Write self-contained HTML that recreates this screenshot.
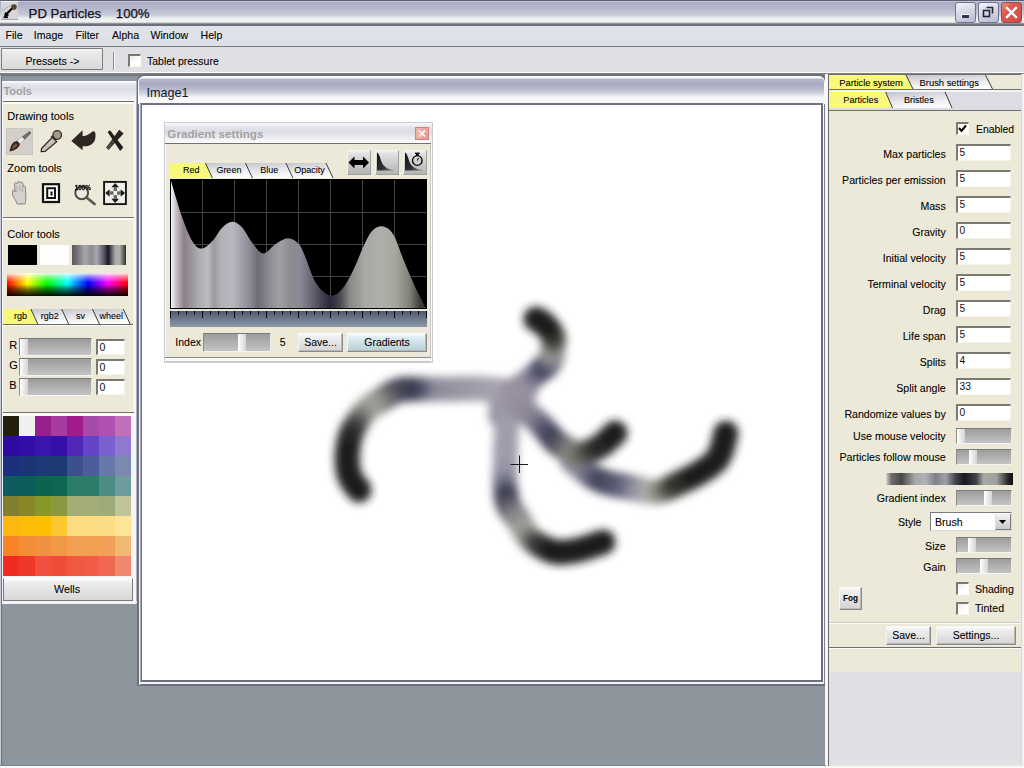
<!DOCTYPE html>
<html><head><meta charset="utf-8"><style>
html,body{margin:0;padding:0;width:1024px;height:768px;overflow:hidden;background:#8e969d;font-family:"Liberation Sans",sans-serif;}
div{box-sizing:border-box;}
</style></head><body>
<div style="position:absolute;left:0px;top:0px;width:1024px;height:26px;background:linear-gradient(to bottom,#5d6070 0,#5d6070 1px,#dcdeec 1px,#a9acc4 2px,#b4b7cb 8px,#c9cbd8 15px,#eceeed 18px,#f2f3f1 22px,#b8bac4 23px,#6c707c 24px,#6c707c 26px);"></div>
<svg style="position:absolute;left:0px;top:0px" width="20" height="22" viewBox="0 0 20 22">
<rect x="1" y="1" width="17" height="19" fill="#d6d6d8"/>
<rect x="1" y="1" width="17" height="1" fill="#f4f4f8"/>
<rect x="1" y="19" width="17" height="1" fill="#a8a8b0"/>
<path d="M2 10.5 L12 5" stroke="#707070" stroke-width="0.8" stroke-dasharray="1 1"/>
<circle cx="14" cy="7" r="2.8" fill="#5a4030"/>
<path d="M12 8.5 L6.5 14" stroke="#000" stroke-width="2.2"/>
<path d="M5 12 L9 15 L7 17 L4 17.5 Z" fill="#000"/>
<path d="M3.5 17.5 H8" stroke="#000" stroke-width="1.2"/>
</svg>
<div style="position:absolute;left:28.6px;top:6.63px;font-size:13.2px;line-height:13.2px;color:#101020;font-weight:normal;white-space:pre;-webkit-text-stroke:0.25px #101020;">PD Particles</div>
<div style="position:absolute;left:115.8px;top:6.63px;font-size:13.2px;line-height:13.2px;color:#101020;font-weight:normal;white-space:pre;-webkit-text-stroke:0.25px #101020;">100%</div>
<div style="position:absolute;left:955px;top:2px;width:21px;height:21px;background:linear-gradient(160deg,#f4f4fa 0%,#dcdce8 40%,#b8bcd2 100%);border:1px solid #707490;border-radius:3px;box-sizing:border-box;"></div>
<div style="position:absolute;left:978px;top:2px;width:21px;height:21px;background:linear-gradient(160deg,#f4f4fa 0%,#dcdce8 40%,#b8bcd2 100%);border:1px solid #707490;border-radius:3px;box-sizing:border-box;"></div>
<div style="position:absolute;left:1001px;top:2px;width:21px;height:21px;background:linear-gradient(135deg,#e8907a 0%,#dc5a50 35%,#d04848 100%);border:1px solid #8a5058;border-radius:3px;box-sizing:border-box;"></div>
<div style="position:absolute;left:961px;top:14px;width:8px;height:4px;background:#30344c;border-top:1px solid #fff;border-left:1px solid #fff;"></div>
<svg style="position:absolute;left:978px;top:2px" width="21" height="21"><path d="M8.5 5.5 H14.5 V11.5" stroke="#202438" stroke-width="1.6" fill="none"/><rect x="5.5" y="8.5" width="6" height="6" stroke="#202438" stroke-width="1.6" fill="none"/></svg>
<svg style="position:absolute;left:1001px;top:2px" width="21" height="21"><path d="M6 6 L15 15 M15 6 L6 15" stroke="#fff" stroke-width="2.4" stroke-linecap="square"/></svg>
<div style="position:absolute;left:0px;top:26px;width:1024px;height:20px;background:linear-gradient(to bottom,#e2e4ec,#dcdfe6);"></div>
<div style="position:absolute;left:0px;top:46px;width:1024px;height:1px;background:#767a78;"></div>
<div style="position:absolute;left:5.5px;top:30.33px;font-size:10.6px;line-height:10.6px;color:#000;font-weight:normal;white-space:pre;-webkit-text-stroke:0.08px #000;">File</div>
<div style="position:absolute;left:33.8px;top:30.33px;font-size:10.6px;line-height:10.6px;color:#000;font-weight:normal;white-space:pre;-webkit-text-stroke:0.08px #000;">Image</div>
<div style="position:absolute;left:75.5px;top:30.33px;font-size:10.6px;line-height:10.6px;color:#000;font-weight:normal;white-space:pre;-webkit-text-stroke:0.08px #000;">Filter</div>
<div style="position:absolute;left:112px;top:30.33px;font-size:10.6px;line-height:10.6px;color:#000;font-weight:normal;white-space:pre;-webkit-text-stroke:0.08px #000;">Alpha</div>
<div style="position:absolute;left:150.5px;top:30.33px;font-size:10.6px;line-height:10.6px;color:#000;font-weight:normal;white-space:pre;-webkit-text-stroke:0.08px #000;">Window</div>
<div style="position:absolute;left:200.5px;top:30.33px;font-size:10.6px;line-height:10.6px;color:#000;font-weight:normal;white-space:pre;-webkit-text-stroke:0.08px #000;">Help</div>
<div style="position:absolute;left:0px;top:47px;width:1024px;height:26px;background:#e0dfe4;"></div>
<div style="position:absolute;left:0px;top:72px;width:1024px;height:1px;background:#fafafa;"></div>
<div style="position:absolute;left:0px;top:73px;width:1024px;height:3px;background:linear-gradient(to bottom,#84888c,#6e727a);"></div>
<div style="position:absolute;left:1px;top:48px;width:102px;height:22px;background:linear-gradient(to bottom,#fbfbfb 0,#ededed 2px,#d8d8d8 100%);border:1px solid #7a7a7a;box-sizing:border-box;border-radius:1px;"></div>
<div style="position:absolute;left:25.5px;top:55.53px;font-size:10.6px;line-height:10.6px;color:#000;font-weight:normal;white-space:pre;-webkit-text-stroke:0.08px #000;">Pressets -&gt;</div>
<div style="position:absolute;left:113px;top:52px;width:1px;height:18px;background:#8c8c90;"></div>
<div style="position:absolute;left:114px;top:52px;width:1px;height:18px;background:#fcfcfc;"></div>
<div style="position:absolute;left:128px;top:54px;width:13px;height:13px;background:linear-gradient(135deg,#ecece8,#fff 60%);border-top:2px solid #7a7a72;border-left:2px solid #7a7a72;border-right:1px solid #fafaf6;border-bottom:1px solid #fafaf6;"></div>
<div style="position:absolute;left:147px;top:56.41px;font-size:10.5px;line-height:10.5px;color:#000;font-weight:normal;white-space:pre;-webkit-text-stroke:0.08px #000;">Tablet pressure</div>
<div style="position:absolute;left:0px;top:76px;width:1024px;height:692px;background:#8e969d;"></div>
<div style="position:absolute;left:0px;top:75px;width:2px;height:693px;background:#c8ccd8;"></div>
<div style="position:absolute;left:1px;top:75px;width:1px;height:693px;background:#6c7484;"></div>
<div style="position:absolute;left:2px;top:81px;width:135px;height:523px;background:#f4f4f8;"></div>
<div style="position:absolute;left:2px;top:81px;width:134px;height:21px;background:linear-gradient(to bottom,#ffffff 0,#e6e6ee 3px,#dcdce6 8px,#ececf0 15px,#f8f8f8 20px);"></div>
<div style="position:absolute;left:136px;top:81px;width:1px;height:523px;background:#aab0bc;"></div>
<div style="position:absolute;left:3.4px;top:86.29px;font-size:11px;line-height:11px;color:#a0a0a0;font-weight:bold;white-space:pre;">Tools</div>
<div style="position:absolute;left:3px;top:101px;width:131px;height:1px;background:#6e6e6a;"></div>
<div style="position:absolute;left:3px;top:102px;width:131px;height:2px;background:#fdfdf8;"></div>
<div style="position:absolute;left:3px;top:104px;width:130px;height:308px;background:#ece9d8;"></div>
<div style="position:absolute;left:133px;top:102px;width:3px;height:500px;background:#f6f6f4;"></div>
<div style="position:absolute;left:7.3px;top:110.89px;font-size:11px;line-height:11px;color:#000;font-weight:normal;white-space:pre;-webkit-text-stroke:0.08px #000;">Drawing tools</div>
<div style="position:absolute;left:7.3px;top:162.69px;font-size:11px;line-height:11px;color:#000;font-weight:normal;white-space:pre;-webkit-text-stroke:0.08px #000;">Zoom tools</div>
<div style="position:absolute;left:3px;top:217px;width:131px;height:1px;background:#74746c;"></div>
<div style="position:absolute;left:3px;top:218px;width:131px;height:2px;background:#fcfcf8;"></div>
<div style="position:absolute;left:3px;top:220px;width:130px;height:192px;background:#ece9d8;"></div>
<div style="position:absolute;left:7.3px;top:228.69px;font-size:11px;line-height:11px;color:#000;font-weight:normal;white-space:pre;-webkit-text-stroke:0.08px #000;">Color tools</div>
<svg style="position:absolute;left:0;top:120px" width="136" height="95" viewBox="0 120 136 95">
<defs><filter id="sb" x="-30%" y="-30%" width="160%" height="160%"><feGaussianBlur stdDeviation="0.6"/></filter>
<filter id="sb2" x="-30%" y="-30%" width="160%" height="160%"><feGaussianBlur stdDeviation="0.45"/></filter>
<linearGradient id="xg" x1="0" y1="0" x2="0" y2="1"><stop offset="0" stop-color="#201a18"/><stop offset="1" stop-color="#3a3430"/></linearGradient></defs>
<rect x="6" y="128" width="27" height="27" fill="#c9c5c0"/>
<rect x="7" y="129" width="25" height="25" fill="#d2cfca"/>
<g filter="url(#sb2)">
<path d="M29.5 131.5 L31 133 L24 140 L21.5 137.5 Z" fill="#74726a" stroke="#4a4840" stroke-width="0.6"/>
<path d="M21.8 136.6 L24.6 139.4 L19.6 144.2 L16.8 141.4 Z" fill="#eeeeee" stroke="#8a8a8a" stroke-width="0.5"/>
<path d="M17.5 141 C13 141 10.5 145 9.5 151.5 C15 150.5 19 148 20 144 Z" fill="#3e2a1e"/>
<path d="M16 143.5 C13.5 144.5 12.5 146.5 12 149 C14.5 148 16.5 146.5 17.5 145 Z" fill="#7a5a44"/>
</g>
<g filter="url(#sb2)">
<circle cx="57.2" cy="135" r="4.3" fill="#a49690" stroke="#3a2a20" stroke-width="1.3"/>
<path d="M51.5 136 L56 140.5" stroke="#3a2a20" stroke-width="2.2"/>
<path d="M52.3 137.3 L56.7 141.7 L45 151.5 L41.2 151.6 L41.5 148.5 Z" fill="#c8c0b8" stroke="#2a2220" stroke-width="1.2"/>
<path d="M71.3 141 L82.6 130.3 L82.6 136.2 C86.5 136 89.5 134 92.5 131.5 C95.5 130.5 96 134.5 95.3 138.5 C94.3 143.5 90 146.5 84.5 146.3 L82.6 146.2 L82.6 150.3 Z" fill="#2e2620"/>
</g>
<g filter="url(#sb)">
<polygon points="107.6,132 110,130.3 123.3,147.6 120.2,151" fill="#221c1a"/>
<polygon points="119.2,129.8 123.6,133.6 108.6,149.8 106.2,147.6" fill="#2a2420"/>
<polygon points="113,140 106.2,147.6 108.6,149.8 114.5,142" fill="#4a4440"/>
</g>
<g filter="url(#sb2)">
<path d="M17 204 L15.5 200 C13.5 198 12 195 12.5 191 C13 189.5 14.5 190 15 192 L14.5 184 C14.5 182 16.5 182 17 184 L17.5 182.5 C18 180.8 20 181 20 183 L20.5 183 C21 181.5 23 182 23 184 L23.5 187 C24 185.5 25.5 186 25.5 188 L25.8 197 C25.8 200 25.5 202.5 25 204 Z" fill="#d4d0cc" stroke="#8a8682" stroke-width="1"/>
<path d="M17 186 V192 M20 185 V191 M22.5 186 V192" stroke="#a09c98" stroke-width="0.7"/>
</g>
<rect x="43" y="184.2" width="16" height="17.8" fill="#fbfbf8" stroke="#111" stroke-width="2.2"/>
<rect x="47.2" y="188.2" width="7.8" height="9.8" fill="#fbfbf8" stroke="#111" stroke-width="2"/>
<rect x="50.5" y="191.5" width="2" height="4" fill="#111"/>
<g filter="url(#sb2)">
<circle cx="81.7" cy="192.8" r="6.4" fill="#eceae0" stroke="#4c4c4c" stroke-width="2"/>
<path d="M86.5 197.5 L94.5 204" stroke="#585858" stroke-width="2.8" stroke-linecap="round"/>
<text x="82.8" y="190" font-size="7" font-weight="bold" text-anchor="middle" fill="#151515" stroke="#151515" stroke-width="0.35" font-family="Liberation Sans" textLength="16" lengthAdjust="spacingAndGlyphs">100%</text>
</g>
<rect x="104.1" y="181.9" width="21.8" height="22.2" fill="#f2f0ea" stroke="#151515" stroke-width="1.9"/>
<g filter="url(#sb2)">
<path d="M115.2 183 L119 187.3 L111.4 187.3 Z" fill="#1a1a1a"/><path d="M115.2 203 L119 198.7 L111.4 198.7 Z" fill="#1a1a1a"/>
<path d="M105.3 193 L109.6 189.2 L109.6 196.8 Z" fill="#1a1a1a"/><path d="M125 193 L120.7 189.2 L120.7 196.8 Z" fill="#1a1a1a"/>
<rect x="113.6" y="187" width="3.4" height="4" fill="#6a6a6a"/><rect x="113.6" y="195" width="3.4" height="4" fill="#6a6a6a"/>
<rect x="109.5" y="191.3" width="4" height="3.4" fill="#6a6a6a"/><rect x="117" y="191.3" width="4" height="3.4" fill="#6a6a6a"/>
</g>
</svg>
<div style="position:absolute;left:8px;top:245px;width:29px;height:20px;background:#000;"></div>
<div style="position:absolute;left:40px;top:245px;width:29px;height:20px;background:#fdfdfb;"></div>
<div style="position:absolute;left:72px;top:245px;width:54px;height:20px;background:linear-gradient(to right,#585858 0%,#787078 10%,#a8a8ac 24%,#8a8a90 36%,#a8a8b0 46%,#505060 60%,#181828 67%,#a8a8a8 80%,#b0b0a8 88%,#303028 100%);"></div>
<div style="position:absolute;left:7px;top:273px;width:121px;height:23px;background:linear-gradient(to bottom,rgba(255,255,255,0.9) 0%,rgba(255,255,255,0.45) 18%,rgba(255,255,255,0) 42%,rgba(0,0,0,0) 48%,rgba(0,0,0,0.55) 72%,rgba(0,0,0,0.95) 100%),linear-gradient(to right,#ff0000 0%,#ffff00 17%,#00ff00 33%,#00ffff 50%,#0000ff 67%,#ff00ff 83%,#ff0000 100%);"></div>
<svg style="position:absolute;left:3px;top:309px" width="130" height="15" viewBox="0 0 130 15"><defs><linearGradient id="tg1" x1="0" y1="0" x2="0.3" y2="1"><stop offset="0" stop-color="#c4c4cc"/><stop offset="0.55" stop-color="#e6e6ea"/><stop offset="1" stop-color="#fbfbfb"/></linearGradient></defs><polygon points="0,0 27.8,0 34.8,15 0,15" fill="#f8f87a"/><polygon points="27.8,0 58.6,0 65.6,15 34.8,15" fill="url(#tg1)"/><polygon points="58.6,0 89.4,0 96.4,15 65.6,15" fill="url(#tg1)"/><polygon points="89.4,0 120.2,0 127.19999999999999,15 96.4,15" fill="url(#tg1)"/><line x1="27.8" y1="0" x2="34.8" y2="15" stroke="#3c3c3c" stroke-width="1"/><line x1="58.6" y1="0" x2="65.6" y2="15" stroke="#3c3c3c" stroke-width="1"/><line x1="89.4" y1="0" x2="96.4" y2="15" stroke="#3c3c3c" stroke-width="1"/><line x1="120.2" y1="0" x2="127.19999999999999" y2="15" stroke="#3c3c3c" stroke-width="1"/></svg>
<div style="position:absolute;left:-179.6px;width:400px;top:311.68px;font-size:9px;line-height:9px;color:#000;font-weight:normal;white-space:pre;text-align:center;-webkit-text-stroke:0.08px #000;">rgb</div>
<div style="position:absolute;left:-150.3px;width:400px;top:311.68px;font-size:9px;line-height:9px;color:#000;font-weight:normal;white-space:pre;text-align:center;-webkit-text-stroke:0.08px #000;">rgb2</div>
<div style="position:absolute;left:-119.5px;width:400px;top:311.68px;font-size:9px;line-height:9px;color:#000;font-weight:normal;white-space:pre;text-align:center;-webkit-text-stroke:0.08px #000;">sv</div>
<div style="position:absolute;left:-88.69999999999999px;width:400px;top:311.68px;font-size:9px;line-height:9px;color:#000;font-weight:normal;white-space:pre;text-align:center;-webkit-text-stroke:0.08px #000;">wheel</div>
<div style="position:absolute;left:3px;top:324px;width:130px;height:1px;background:#6a6a66;"></div>
<div style="position:absolute;left:3px;top:325px;width:130px;height:1px;background:#fafaf6;"></div>
<div style="position:absolute;left:9.3px;top:339.69px;font-size:11px;line-height:11px;color:#000;font-weight:normal;white-space:pre;-webkit-text-stroke:0.08px #000;">R</div>
<div style="position:absolute;left:19px;top:338px;width:73px;height:18px;background:linear-gradient(to bottom,#9c9c9c,#c4c4c4);border-top:1px solid #7a7a7a;border-left:1px solid #8a8a8a;border-bottom:1px solid #f4f4f4;border-right:1px solid #eaeaea;"></div>
<div style="position:absolute;left:20px;top:339px;width:8px;height:16px;background:linear-gradient(to right,#ffffff,#d4d4d4);"></div>
<div style="position:absolute;left:96px;top:339px;width:29px;height:16px;background:#fff;border-top:2px solid #7a7a72;border-left:2px solid #7a7a72;border-right:1px solid #f4f4ee;border-bottom:1px solid #f4f4ee;"></div>
<div style="position:absolute;left:99.5px;top:342.03px;font-size:10.6px;line-height:10.6px;color:#101010;font-weight:normal;white-space:pre;">0</div>
<div style="position:absolute;left:9.3px;top:359.69px;font-size:11px;line-height:11px;color:#000;font-weight:normal;white-space:pre;-webkit-text-stroke:0.08px #000;">G</div>
<div style="position:absolute;left:19px;top:358px;width:73px;height:18px;background:linear-gradient(to bottom,#9c9c9c,#c4c4c4);border-top:1px solid #7a7a7a;border-left:1px solid #8a8a8a;border-bottom:1px solid #f4f4f4;border-right:1px solid #eaeaea;"></div>
<div style="position:absolute;left:20px;top:359px;width:8px;height:16px;background:linear-gradient(to right,#ffffff,#d4d4d4);"></div>
<div style="position:absolute;left:96px;top:359px;width:29px;height:16px;background:#fff;border-top:2px solid #7a7a72;border-left:2px solid #7a7a72;border-right:1px solid #f4f4ee;border-bottom:1px solid #f4f4ee;"></div>
<div style="position:absolute;left:99.5px;top:362.03px;font-size:10.6px;line-height:10.6px;color:#101010;font-weight:normal;white-space:pre;">0</div>
<div style="position:absolute;left:9.3px;top:379.69px;font-size:11px;line-height:11px;color:#000;font-weight:normal;white-space:pre;-webkit-text-stroke:0.08px #000;">B</div>
<div style="position:absolute;left:19px;top:378px;width:73px;height:18px;background:linear-gradient(to bottom,#9c9c9c,#c4c4c4);border-top:1px solid #7a7a7a;border-left:1px solid #8a8a8a;border-bottom:1px solid #f4f4f4;border-right:1px solid #eaeaea;"></div>
<div style="position:absolute;left:20px;top:379px;width:8px;height:16px;background:linear-gradient(to right,#ffffff,#d4d4d4);"></div>
<div style="position:absolute;left:96px;top:379px;width:29px;height:16px;background:#fff;border-top:2px solid #7a7a72;border-left:2px solid #7a7a72;border-right:1px solid #f4f4ee;border-bottom:1px solid #f4f4ee;"></div>
<div style="position:absolute;left:99.5px;top:382.03px;font-size:10.6px;line-height:10.6px;color:#101010;font-weight:normal;white-space:pre;">0</div>
<div style="position:absolute;left:3px;top:412px;width:131px;height:1px;background:#74746c;"></div>
<div style="position:absolute;left:3px;top:413px;width:131px;height:3px;background:#fcfcf8;"></div>
<div style="position:absolute;left:3px;top:416px;width:16px;height:20px;background:#24200e;"></div>
<div style="position:absolute;left:19px;top:416px;width:16px;height:20px;background:#f0f0f0;"></div>
<div style="position:absolute;left:35px;top:416px;width:16px;height:20px;background:#98208a;"></div>
<div style="position:absolute;left:51px;top:416px;width:16px;height:20px;background:#a83c9e;"></div>
<div style="position:absolute;left:67px;top:416px;width:16px;height:20px;background:#a01c8c;"></div>
<div style="position:absolute;left:83px;top:416px;width:16px;height:20px;background:#a84aa8;"></div>
<div style="position:absolute;left:99px;top:416px;width:16px;height:20px;background:#b050b0;"></div>
<div style="position:absolute;left:115px;top:416px;width:16px;height:20px;background:#c070b8;"></div>
<div style="position:absolute;left:3px;top:436px;width:16px;height:20px;background:#2e0ca0;"></div>
<div style="position:absolute;left:19px;top:436px;width:16px;height:20px;background:#340ca8;"></div>
<div style="position:absolute;left:35px;top:436px;width:16px;height:20px;background:#3c14b0;"></div>
<div style="position:absolute;left:51px;top:436px;width:16px;height:20px;background:#3410a8;"></div>
<div style="position:absolute;left:67px;top:436px;width:16px;height:20px;background:#5028b8;"></div>
<div style="position:absolute;left:83px;top:436px;width:16px;height:20px;background:#6444c8;"></div>
<div style="position:absolute;left:99px;top:436px;width:16px;height:20px;background:#7c60d0;"></div>
<div style="position:absolute;left:115px;top:436px;width:16px;height:20px;background:#9078d0;"></div>
<div style="position:absolute;left:3px;top:456px;width:16px;height:20px;background:#1c3080;"></div>
<div style="position:absolute;left:19px;top:456px;width:16px;height:20px;background:#1c3478;"></div>
<div style="position:absolute;left:35px;top:456px;width:16px;height:20px;background:#1c3a78;"></div>
<div style="position:absolute;left:51px;top:456px;width:16px;height:20px;background:#1c3a74;"></div>
<div style="position:absolute;left:67px;top:456px;width:16px;height:20px;background:#3c5090;"></div>
<div style="position:absolute;left:83px;top:456px;width:16px;height:20px;background:#4c5c9c;"></div>
<div style="position:absolute;left:99px;top:456px;width:16px;height:20px;background:#6878a8;"></div>
<div style="position:absolute;left:115px;top:456px;width:16px;height:20px;background:#7c88b0;"></div>
<div style="position:absolute;left:3px;top:476px;width:16px;height:20px;background:#0c5c60;"></div>
<div style="position:absolute;left:19px;top:476px;width:16px;height:20px;background:#0c5c5c;"></div>
<div style="position:absolute;left:35px;top:476px;width:16px;height:20px;background:#0c6450;"></div>
<div style="position:absolute;left:51px;top:476px;width:16px;height:20px;background:#0c6850;"></div>
<div style="position:absolute;left:67px;top:476px;width:16px;height:20px;background:#2c7c6c;"></div>
<div style="position:absolute;left:83px;top:476px;width:16px;height:20px;background:#2c7c6c;"></div>
<div style="position:absolute;left:99px;top:476px;width:16px;height:20px;background:#4c8c84;"></div>
<div style="position:absolute;left:115px;top:476px;width:16px;height:20px;background:#6c9c9c;"></div>
<div style="position:absolute;left:3px;top:496px;width:16px;height:20px;background:#808030;"></div>
<div style="position:absolute;left:19px;top:496px;width:16px;height:20px;background:#888828;"></div>
<div style="position:absolute;left:35px;top:496px;width:16px;height:20px;background:#889828;"></div>
<div style="position:absolute;left:51px;top:496px;width:16px;height:20px;background:#8c9840;"></div>
<div style="position:absolute;left:67px;top:496px;width:16px;height:20px;background:#a4ac78;"></div>
<div style="position:absolute;left:83px;top:496px;width:16px;height:20px;background:#a4ac78;"></div>
<div style="position:absolute;left:99px;top:496px;width:16px;height:20px;background:#a0ac78;"></div>
<div style="position:absolute;left:115px;top:496px;width:16px;height:20px;background:#c0c498;"></div>
<div style="position:absolute;left:3px;top:516px;width:16px;height:20px;background:#fcb810;"></div>
<div style="position:absolute;left:19px;top:516px;width:16px;height:20px;background:#fcbc08;"></div>
<div style="position:absolute;left:35px;top:516px;width:16px;height:20px;background:#fcc000;"></div>
<div style="position:absolute;left:51px;top:516px;width:16px;height:20px;background:#fcc830;"></div>
<div style="position:absolute;left:67px;top:516px;width:16px;height:20px;background:#fcdc80;"></div>
<div style="position:absolute;left:83px;top:516px;width:16px;height:20px;background:#fcdc80;"></div>
<div style="position:absolute;left:99px;top:516px;width:16px;height:20px;background:#fcdc84;"></div>
<div style="position:absolute;left:115px;top:516px;width:16px;height:20px;background:#fce498;"></div>
<div style="position:absolute;left:3px;top:536px;width:16px;height:20px;background:#f88428;"></div>
<div style="position:absolute;left:19px;top:536px;width:16px;height:20px;background:#f48c38;"></div>
<div style="position:absolute;left:35px;top:536px;width:16px;height:20px;background:#f09040;"></div>
<div style="position:absolute;left:51px;top:536px;width:16px;height:20px;background:#f09844;"></div>
<div style="position:absolute;left:67px;top:536px;width:16px;height:20px;background:#f0a050;"></div>
<div style="position:absolute;left:83px;top:536px;width:16px;height:20px;background:#f0a050;"></div>
<div style="position:absolute;left:99px;top:536px;width:16px;height:20px;background:#f0a058;"></div>
<div style="position:absolute;left:115px;top:536px;width:16px;height:20px;background:#f0b870;"></div>
<div style="position:absolute;left:3px;top:556px;width:16px;height:20px;background:#f02c20;"></div>
<div style="position:absolute;left:19px;top:556px;width:16px;height:20px;background:#f03828;"></div>
<div style="position:absolute;left:35px;top:556px;width:16px;height:20px;background:#f05040;"></div>
<div style="position:absolute;left:51px;top:556px;width:16px;height:20px;background:#f04c38;"></div>
<div style="position:absolute;left:67px;top:556px;width:16px;height:20px;background:#f05840;"></div>
<div style="position:absolute;left:83px;top:556px;width:16px;height:20px;background:#f05c48;"></div>
<div style="position:absolute;left:99px;top:556px;width:16px;height:20px;background:#f06850;"></div>
<div style="position:absolute;left:115px;top:556px;width:16px;height:20px;background:#f08870;"></div>
<div style="position:absolute;left:131px;top:416px;width:2px;height:160px;background:#f4f4f4;"></div>
<div style="position:absolute;left:3px;top:578px;width:130px;height:23px;background:linear-gradient(to bottom,#fbfbfb 0,#eeeeee 3px,#d6d6d6 100%);border:1px solid #7a7a7a;border-top-color:#ffffff;"></div>
<div style="position:absolute;left:-133px;width:400px;top:584.36px;font-size:10.8px;line-height:10.8px;color:#000;font-weight:normal;white-space:pre;text-align:center;-webkit-text-stroke:0.08px #000;">Wells</div>
<div style="position:absolute;left:2px;top:601px;width:135px;height:2px;background:#f4f4f6;"></div>
<div style="position:absolute;left:137px;top:74px;width:689px;height:612px;background:#6c7078;border-radius:7px 7px 0 0;"></div>
<div style="position:absolute;left:138px;top:76px;width:687px;height:609px;background:#fafafc;border-radius:6px 6px 0 0;"></div>
<div style="position:absolute;left:139px;top:77px;width:685px;height:27px;background:linear-gradient(to bottom,#fafafe 0,#fafafe 1px,#b4b6cc 2px,#a8aac2 7px,#b6b9cb 12px,#d4d8e2 17px,#f4f5f8 20px,#fafafa 26px);border-radius:5px 5px 0 0;"></div>
<div style="position:absolute;left:146.5px;top:86.53px;font-size:12.6px;line-height:12.6px;color:#101828;font-weight:normal;white-space:pre;">Image1</div>
<div style="position:absolute;left:140px;top:103px;width:683px;height:1px;background:#70747c;"></div>
<div style="position:absolute;left:140px;top:104px;width:683px;height:580px;background:#6c7080;"></div>
<div style="position:absolute;left:142px;top:105px;width:679px;height:575px;background:#ffffff;"></div>
<div style="position:absolute;left:140px;top:104px;width:1px;height:580px;background:#a4a4b4;"></div>
<div style="position:absolute;left:823px;top:104px;width:1px;height:581px;background:#fafafa;"></div>
<div style="position:absolute;left:824px;top:104px;width:1px;height:581px;background:#7c8090;"></div>
<div style="position:absolute;left:140px;top:682px;width:684px;height:2px;background:#f4f4f8;"></div>
<div style="position:absolute;left:139px;top:684px;width:686px;height:1px;background:#6c7080;"></div>
<div style="position:absolute;left:139px;top:104px;width:1px;height:581px;background:#f4f4f8;"></div>
<div style="position:absolute;left:138px;top:104px;width:1px;height:581px;background:#6c7080;"></div>
<div style="position:absolute;left:164px;top:122px;width:269px;height:241px;background:#f8f8f8;border:1px solid #c8ccd4;"></div>
<div style="position:absolute;left:165px;top:123px;width:267px;height:20px;background:linear-gradient(to bottom,#fafafc 0,#e4e4ec 4px,#dcdce4 9px,#eeeef2 15px,#fafafa 19px);"></div>
<div style="position:absolute;left:167.3px;top:128.30px;font-size:11.7px;line-height:11.7px;color:#a2a2a2;font-weight:bold;white-space:pre;">Gradient settings</div>
<div style="position:absolute;left:415px;top:127px;width:14px;height:13px;background:linear-gradient(135deg,#f4b8b0,#e89890);border:1px solid #d88080;"></div>
<svg style="position:absolute;left:415px;top:127px" width="14" height="13"><path d="M4 3.5 L10 9.5 M10 3.5 L4 9.5" stroke="#fff" stroke-width="1.6"/></svg>
<div style="position:absolute;left:165px;top:143px;width:266px;height:1px;background:#707070;"></div>
<div style="position:absolute;left:165px;top:144px;width:266px;height:214px;background:#ece9d8;border-left:1px solid #f8f8f6;border-right:1px solid #c8c8c8;"></div>
<div style="position:absolute;left:165px;top:357px;width:266px;height:1px;background:#8a8a86;"></div>
<div style="position:absolute;left:165px;top:358px;width:266px;height:3px;background:#fafafa;"></div>
<div style="position:absolute;left:166px;top:361px;width:265px;height:1px;background:#c8c8cc;"></div>
<svg style="position:absolute;left:170px;top:163px" width="170" height="15" viewBox="0 0 170 15"><defs><linearGradient id="tg2" x1="0" y1="0" x2="0.3" y2="1"><stop offset="0" stop-color="#c4c4cc"/><stop offset="0.55" stop-color="#e6e6ea"/><stop offset="1" stop-color="#fbfbfb"/></linearGradient></defs><polygon points="0,0 35.400000000000006,0 42.400000000000006,15 0,15" fill="#f8f87a"/><polygon points="35.400000000000006,0 75.4,0 82.4,15 42.400000000000006,15" fill="url(#tg2)"/><polygon points="75.4,0 115.89999999999998,0 122.89999999999998,15 82.4,15" fill="url(#tg2)"/><polygon points="115.89999999999998,0 156,0 163,15 122.89999999999998,15" fill="url(#tg2)"/><line x1="35.400000000000006" y1="0" x2="42.400000000000006" y2="15" stroke="#3c3c3c" stroke-width="1"/><line x1="75.4" y1="0" x2="82.4" y2="15" stroke="#3c3c3c" stroke-width="1"/><line x1="115.89999999999998" y1="0" x2="122.89999999999998" y2="15" stroke="#3c3c3c" stroke-width="1"/><line x1="156" y1="0" x2="163" y2="15" stroke="#3c3c3c" stroke-width="1"/></svg>
<div style="position:absolute;left:-8.800000000000011px;width:400px;top:165.98px;font-size:9px;line-height:9px;color:#000;font-weight:normal;white-space:pre;text-align:center;-webkit-text-stroke:0.08px #000;">Red</div>
<div style="position:absolute;left:28.900000000000006px;width:400px;top:165.98px;font-size:9px;line-height:9px;color:#000;font-weight:normal;white-space:pre;text-align:center;-webkit-text-stroke:0.08px #000;">Green</div>
<div style="position:absolute;left:69.14999999999998px;width:400px;top:165.98px;font-size:9px;line-height:9px;color:#000;font-weight:normal;white-space:pre;text-align:center;-webkit-text-stroke:0.08px #000;">Blue</div>
<div style="position:absolute;left:109.44999999999999px;width:400px;top:165.98px;font-size:9px;line-height:9px;color:#000;font-weight:normal;white-space:pre;text-align:center;-webkit-text-stroke:0.08px #000;">Opacity</div>
<div style="position:absolute;left:347px;top:150px;width:24px;height:25px;background:linear-gradient(to bottom,#f0f0f0 0,#e0e0e0 3px,#b4b4b4 100%);border:1px solid #a0a0a0;border-top-color:#f4f4f4;border-left-color:#f0f0f0;"></div>
<div style="position:absolute;left:375px;top:150px;width:24px;height:25px;background:linear-gradient(to bottom,#f0f0f0 0,#e0e0e0 3px,#b4b4b4 100%);border:1px solid #a0a0a0;border-top-color:#f4f4f4;border-left-color:#f0f0f0;"></div>
<div style="position:absolute;left:403px;top:150px;width:24px;height:25px;background:linear-gradient(to bottom,#f0f0f0 0,#e0e0e0 3px,#b4b4b4 100%);border:1px solid #a0a0a0;border-top-color:#f4f4f4;border-left-color:#f0f0f0;"></div>
<svg style="position:absolute;left:347px;top:150px" width="84" height="25">
<path d="M1.5 12.5 L7.5 6.5 L7.5 10 L11.5 10 L11.5 15 L7.5 15 L7.5 18.5 Z" fill="#000"/>
<path d="M22 12.5 L16 6.5 L16 10 L11 10 L11 15 L16 15 L16 18.5 Z" fill="#000"/>
<defs><linearGradient id="gcrv" x1="0" y1="0" x2="1" y2="1"><stop offset="0" stop-color="#101010"/><stop offset="0.6" stop-color="#303030"/><stop offset="1" stop-color="#8a8a8a"/></linearGradient></defs>
<path d="M30 2.5 C32 3 33 8 35 13 C37 17 41 19.5 48 20.5 L30 20.5 Z" fill="url(#gcrv)"/>
<path d="M58 2.5 C60 3 61 8 63 13 C65 17 69 19.5 77 20.5 L58 20.5 Z" fill="url(#gcrv)"/>
<circle cx="70.3" cy="10.5" r="4.8" fill="#d0d0d0" stroke="#000" stroke-width="1.3"/>
<path d="M70.3 10.5 L71.5 8" stroke="#000" stroke-width="1"/>
<rect x="69" y="4" width="2.6" height="2" fill="#000"/>
<rect x="68" y="2.6" width="4.6" height="1.4" fill="#000"/>
</svg>
<svg style="position:absolute;left:170px;top:179px" width="257" height="130" viewBox="0 0 257 130">
<defs><linearGradient id="gfill" x1="1" y1="0" x2="256" y2="0" gradientUnits="userSpaceOnUse"><stop offset="0.000" stop-color="#f4f4fa"/><stop offset="0.020" stop-color="#c8c0c8"/><stop offset="0.051" stop-color="#8a8088"/><stop offset="0.075" stop-color="#9a9098"/><stop offset="0.114" stop-color="#b0b0b4"/><stop offset="0.145" stop-color="#bcbcc0"/><stop offset="0.169" stop-color="#9a9a9e"/><stop offset="0.192" stop-color="#b0b0b4"/><stop offset="0.239" stop-color="#b8b8c0"/><stop offset="0.271" stop-color="#a4a4b0"/><stop offset="0.310" stop-color="#8a8a94"/><stop offset="0.341" stop-color="#6c6c74"/><stop offset="0.380" stop-color="#88888e"/><stop offset="0.427" stop-color="#a0a0a6"/><stop offset="0.467" stop-color="#8c8c90"/><stop offset="0.506" stop-color="#8a8a96"/><stop offset="0.545" stop-color="#6c6c78"/><stop offset="0.584" stop-color="#484858"/><stop offset="0.624" stop-color="#282838"/><stop offset="0.663" stop-color="#484850"/><stop offset="0.702" stop-color="#8a8a88"/><stop offset="0.761" stop-color="#a8a8a4"/><stop offset="0.820" stop-color="#b0b0aa"/><stop offset="0.878" stop-color="#a8a8a0"/><stop offset="0.937" stop-color="#808078"/><stop offset="0.976" stop-color="#404038"/><stop offset="1.000" stop-color="#303028"/></linearGradient></defs>
<rect width="257" height="130" fill="#000"/><line x1="32.5" y1="0" x2="32.5" y2="130" stroke="#444444" stroke-width="1"/><line x1="64.5" y1="0" x2="64.5" y2="130" stroke="#444444" stroke-width="1"/><line x1="96.5" y1="0" x2="96.5" y2="130" stroke="#444444" stroke-width="1"/><line x1="128.5" y1="0" x2="128.5" y2="130" stroke="#444444" stroke-width="1"/><line x1="160.5" y1="0" x2="160.5" y2="130" stroke="#444444" stroke-width="1"/><line x1="192.5" y1="0" x2="192.5" y2="130" stroke="#444444" stroke-width="1"/><line x1="224.5" y1="0" x2="224.5" y2="130" stroke="#444444" stroke-width="1"/><line x1="256.5" y1="0" x2="256.5" y2="130" stroke="#444444" stroke-width="1"/><line x1="0" y1="33.5" x2="257" y2="33.5" stroke="#444444" stroke-width="1"/><line x1="0" y1="65.5" x2="257" y2="65.5" stroke="#444444" stroke-width="1"/><line x1="0" y1="97.5" x2="257" y2="97.5" stroke="#444444" stroke-width="1"/>
<path d="M1,2 C2.8,7.9 8.4,27.6 12.0,37.7 C15.6,47.8 19.3,57.2 22.5,62.5 C25.7,67.8 28.2,69.6 31.4,69.6 C34.7,69.6 38.5,66.1 42.0,62.5 C45.5,58.9 49.2,51.6 52.6,48.3 C56.0,45.0 59.2,42.7 62.4,42.7 C65.6,42.7 68.6,44.7 72.0,48.3 C75.4,51.9 79.1,59.9 82.7,64.3 C86.2,68.7 89.5,74.4 93.3,74.5 C97.1,74.6 101.6,67.5 105.7,65.0 C109.8,62.5 114.2,59.3 118.0,59.3 C121.8,59.3 125.9,62.1 128.7,65.0 C131.5,67.9 132.3,70.8 134.8,76.6 C137.3,82.4 140.8,93.8 143.7,99.7 C146.6,105.6 149.4,109.2 152.5,112.0 C155.6,114.8 159.1,116.8 162.3,116.5 C165.6,116.2 168.6,114.3 172.0,110.3 C175.4,106.3 179.1,99.7 182.6,92.6 C186.2,85.5 190.1,74.6 193.3,67.8 C196.5,61.0 198.8,55.3 202.0,51.9 C205.2,48.5 209.1,46.8 212.7,47.4 C216.2,48.0 219.8,49.6 223.3,55.4 C226.9,61.2 230.4,73.4 234.0,82.0 C237.6,90.6 241.4,99.6 244.6,106.7 C247.8,113.8 251.5,120.7 253.4,124.4 C255.3,128.1 255.6,128.2 256.0,129.0 L256,129 L1,129 Z" fill="url(#gfill)"/>
<rect x="0.5" y="0.5" width="256" height="129" fill="none" stroke="#000"/>
</svg>
<svg style="position:absolute;left:170px;top:311px" width="257" height="16"><defs><linearGradient id="rul" x1="0" y1="0" x2="0" y2="1"><stop offset="0" stop-color="#4c5a6e"/><stop offset="1" stop-color="#8e98a8"/></linearGradient></defs><rect width="257" height="16" fill="url(#rul)"/><line x1="0.5" y1="0" x2="0.5" y2="7" stroke="#000" stroke-width="1"/><line x1="8.5" y1="0" x2="8.5" y2="3.5" stroke="#000" stroke-width="1"/><line x1="16.5" y1="0" x2="16.5" y2="3.5" stroke="#000" stroke-width="1"/><line x1="24.5" y1="0" x2="24.5" y2="3.5" stroke="#000" stroke-width="1"/><line x1="32.5" y1="0" x2="32.5" y2="7" stroke="#000" stroke-width="1"/><line x1="40.5" y1="0" x2="40.5" y2="3.5" stroke="#000" stroke-width="1"/><line x1="48.5" y1="0" x2="48.5" y2="3.5" stroke="#000" stroke-width="1"/><line x1="56.5" y1="0" x2="56.5" y2="3.5" stroke="#000" stroke-width="1"/><line x1="64.5" y1="0" x2="64.5" y2="7" stroke="#000" stroke-width="1"/><line x1="72.5" y1="0" x2="72.5" y2="3.5" stroke="#000" stroke-width="1"/><line x1="80.5" y1="0" x2="80.5" y2="3.5" stroke="#000" stroke-width="1"/><line x1="88.5" y1="0" x2="88.5" y2="3.5" stroke="#000" stroke-width="1"/><line x1="96.5" y1="0" x2="96.5" y2="7" stroke="#000" stroke-width="1"/><line x1="104.5" y1="0" x2="104.5" y2="3.5" stroke="#000" stroke-width="1"/><line x1="112.5" y1="0" x2="112.5" y2="3.5" stroke="#000" stroke-width="1"/><line x1="120.5" y1="0" x2="120.5" y2="3.5" stroke="#000" stroke-width="1"/><line x1="128.5" y1="0" x2="128.5" y2="7" stroke="#000" stroke-width="1"/><line x1="136.5" y1="0" x2="136.5" y2="3.5" stroke="#000" stroke-width="1"/><line x1="144.5" y1="0" x2="144.5" y2="3.5" stroke="#000" stroke-width="1"/><line x1="152.5" y1="0" x2="152.5" y2="3.5" stroke="#000" stroke-width="1"/><line x1="160.5" y1="0" x2="160.5" y2="7" stroke="#000" stroke-width="1"/><line x1="168.5" y1="0" x2="168.5" y2="3.5" stroke="#000" stroke-width="1"/><line x1="176.5" y1="0" x2="176.5" y2="3.5" stroke="#000" stroke-width="1"/><line x1="184.5" y1="0" x2="184.5" y2="3.5" stroke="#000" stroke-width="1"/><line x1="192.5" y1="0" x2="192.5" y2="7" stroke="#000" stroke-width="1"/><line x1="200.5" y1="0" x2="200.5" y2="3.5" stroke="#000" stroke-width="1"/><line x1="208.5" y1="0" x2="208.5" y2="3.5" stroke="#000" stroke-width="1"/><line x1="216.5" y1="0" x2="216.5" y2="3.5" stroke="#000" stroke-width="1"/><line x1="224.5" y1="0" x2="224.5" y2="7" stroke="#000" stroke-width="1"/><line x1="232.5" y1="0" x2="232.5" y2="3.5" stroke="#000" stroke-width="1"/><line x1="240.5" y1="0" x2="240.5" y2="3.5" stroke="#000" stroke-width="1"/><line x1="248.5" y1="0" x2="248.5" y2="3.5" stroke="#000" stroke-width="1"/><line x1="256.5" y1="0" x2="256.5" y2="7" stroke="#000" stroke-width="1"/></svg>
<div style="position:absolute;left:175.3px;top:336.91px;font-size:10.5px;line-height:10.5px;color:#000;font-weight:normal;white-space:pre;-webkit-text-stroke:0.08px #000;">Index</div>
<div style="position:absolute;left:203px;top:333px;width:68px;height:19px;background:linear-gradient(to bottom,#9c9c9c,#c4c4c4);border-top:1px solid #7a7a7a;border-left:1px solid #8a8a8a;border-bottom:1px solid #f4f4f4;border-right:1px solid #eaeaea;"></div>
<div style="position:absolute;left:238px;top:334px;width:8px;height:17px;background:linear-gradient(to right,#ffffff,#d4d4d4);"></div>
<div style="position:absolute;left:279.7px;top:336.91px;font-size:10.5px;line-height:10.5px;color:#000;font-weight:normal;white-space:pre;-webkit-text-stroke:0.08px #000;">5</div>
<div style="position:absolute;left:298px;top:333px;width:45px;height:19px;background:linear-gradient(to bottom,#fbfbfb 0,#efefef 3px,#d4d4d4 100%);border:1px solid #8a8a8a;border-top-color:#fafafa;border-left-color:#f4f4f4;box-shadow:inset -1px -1px 0 #b8b8b8;"></div>
<div style="position:absolute;left:120.5px;width:400px;top:337.41px;font-size:10.5px;line-height:10.5px;color:#000;font-weight:normal;white-space:pre;text-align:center;-webkit-text-stroke:0.08px #000;">Save...</div>
<div style="position:absolute;left:347px;top:333px;width:80px;height:19px;background:linear-gradient(to bottom,#f4fafc 0,#e0eef2 3px,#b8ced6 100%);border:1px solid #8a8a8a;border-top-color:#fafafa;border-left-color:#f4f4f4;box-shadow:inset -1px -1px 0 #b8b8b8;"></div>
<div style="position:absolute;left:187.0px;width:400px;top:337.41px;font-size:10.5px;line-height:10.5px;color:#000;font-weight:normal;white-space:pre;text-align:center;-webkit-text-stroke:0.08px #000;">Gradients</div>
<div style="position:absolute;left:825px;top:74px;width:3px;height:694px;background:#f4f4f6;"></div>
<div style="position:absolute;left:826px;top:74px;width:1px;height:694px;background:#fafafa;"></div>
<div style="position:absolute;left:828px;top:74px;width:196px;height:694px;background:#dfdfe4;"></div>
<div style="position:absolute;left:828px;top:74px;width:1px;height:694px;background:#6c6c70;"></div>
<div style="position:absolute;left:828px;top:74px;width:194px;height:1px;background:#6c6c70;"></div>
<div style="position:absolute;left:1022px;top:74px;width:2px;height:694px;background:#f2f2f4;"></div>
<svg style="position:absolute;left:829px;top:75px" width="193" height="14" viewBox="0 0 193 14"><defs><linearGradient id="tg3" x1="0" y1="0" x2="0.3" y2="1"><stop offset="0" stop-color="#c4c4cc"/><stop offset="0.55" stop-color="#e6e6ea"/><stop offset="1" stop-color="#fbfbfb"/></linearGradient></defs><rect x="0" y="0" width="193" height="14" fill="#ece9d8"/><polygon points="0,0 77,0 84,14 0,14" fill="#f8f87a"/><polygon points="77,0 156.5,0 163.5,14 84,14" fill="url(#tg3)"/><line x1="77" y1="0" x2="84" y2="14" stroke="#3c3c3c" stroke-width="1"/><line x1="156.5" y1="0" x2="163.5" y2="14" stroke="#3c3c3c" stroke-width="1"/></svg>
<div style="position:absolute;left:671.0px;width:400px;top:77.84px;font-size:9.4px;line-height:9.4px;color:#000;font-weight:normal;white-space:pre;text-align:center;-webkit-text-stroke:0.08px #000;">Particle system</div>
<div style="position:absolute;left:749.25px;width:400px;top:77.84px;font-size:9.4px;line-height:9.4px;color:#000;font-weight:normal;white-space:pre;text-align:center;-webkit-text-stroke:0.08px #000;">Brush settings</div>
<div style="position:absolute;left:829px;top:89px;width:193px;height:1px;background:#6e6e6a;"></div>
<div style="position:absolute;left:829px;top:90px;width:193px;height:2px;background:#f4f4f4;"></div>
<svg style="position:absolute;left:829px;top:92px" width="193" height="16" viewBox="0 0 193 16"><defs><linearGradient id="tg4" x1="0" y1="0" x2="0.3" y2="1"><stop offset="0" stop-color="#c4c4cc"/><stop offset="0.55" stop-color="#e6e6ea"/><stop offset="1" stop-color="#fbfbfb"/></linearGradient></defs><rect x="0" y="0" width="193" height="16" fill="#dcdce4"/><polygon points="0,0 56.60000000000002,0 63.60000000000002,16 0,16" fill="#f8f87a"/><polygon points="56.60000000000002,0 116,0 123,16 63.60000000000002,16" fill="url(#tg4)"/><line x1="56.60000000000002" y1="0" x2="63.60000000000002" y2="16" stroke="#3c3c3c" stroke-width="1"/><line x1="116" y1="0" x2="123" y2="16" stroke="#3c3c3c" stroke-width="1"/></svg>
<div style="position:absolute;left:660.8px;width:400px;top:96.00px;font-size:9.1px;line-height:9.1px;color:#000;font-weight:normal;white-space:pre;text-align:center;-webkit-text-stroke:0.08px #000;">Particles</div>
<div style="position:absolute;left:718.8px;width:400px;top:96.00px;font-size:9.1px;line-height:9.1px;color:#000;font-weight:normal;white-space:pre;text-align:center;-webkit-text-stroke:0.08px #000;">Bristles</div>
<div style="position:absolute;left:829px;top:108px;width:193px;height:3px;background:#dcdce4;"></div>
<div style="position:absolute;left:829px;top:110px;width:193px;height:1px;background:#6e6e6a;"></div>
<div style="position:absolute;left:829px;top:111px;width:193px;height:537px;background:#ece9d8;"></div>
<div style="position:absolute;left:956px;top:122px;width:13px;height:13px;background:linear-gradient(135deg,#ecece8,#fff 60%);border-top:2px solid #7a7a72;border-left:2px solid #7a7a72;border-right:1px solid #fafaf6;border-bottom:1px solid #fafaf6;"></div>
<svg style="position:absolute;left:956px;top:122px" width="13" height="13"><path d="M3 6 L5.5 9 L10 3.5" stroke="#000" stroke-width="2" fill="none"/></svg>
<div style="position:absolute;left:976px;top:124.70px;font-size:10.4px;line-height:10.4px;color:#000;font-weight:normal;white-space:pre;-webkit-text-stroke:0.08px #000;">Enabled</div>
<div style="position:absolute;right:78.29999999999995px;top:148.93px;font-size:10.6px;line-height:10.6px;color:#000;font-weight:normal;white-space:pre;text-align:right;-webkit-text-stroke:0.08px #000;">Max particles</div>
<div style="position:absolute;left:956px;top:144px;width:55px;height:17px;background:#fff;border-top:2px solid #7a7a72;border-left:2px solid #7a7a72;border-right:1px solid #f4f4ee;border-bottom:1px solid #f4f4ee;"></div>
<div style="position:absolute;left:959.5px;top:148.37px;font-size:10.2px;line-height:10.2px;color:#101010;font-weight:normal;white-space:pre;">5</div>
<div style="position:absolute;right:78.29999999999995px;top:174.93px;font-size:10.6px;line-height:10.6px;color:#000;font-weight:normal;white-space:pre;text-align:right;-webkit-text-stroke:0.08px #000;">Particles per emission</div>
<div style="position:absolute;left:956px;top:170px;width:55px;height:17px;background:#fff;border-top:2px solid #7a7a72;border-left:2px solid #7a7a72;border-right:1px solid #f4f4ee;border-bottom:1px solid #f4f4ee;"></div>
<div style="position:absolute;left:959.5px;top:174.37px;font-size:10.2px;line-height:10.2px;color:#101010;font-weight:normal;white-space:pre;">5</div>
<div style="position:absolute;right:78.29999999999995px;top:200.93px;font-size:10.6px;line-height:10.6px;color:#000;font-weight:normal;white-space:pre;text-align:right;-webkit-text-stroke:0.08px #000;">Mass</div>
<div style="position:absolute;left:956px;top:196px;width:55px;height:17px;background:#fff;border-top:2px solid #7a7a72;border-left:2px solid #7a7a72;border-right:1px solid #f4f4ee;border-bottom:1px solid #f4f4ee;"></div>
<div style="position:absolute;left:959.5px;top:200.37px;font-size:10.2px;line-height:10.2px;color:#101010;font-weight:normal;white-space:pre;">5</div>
<div style="position:absolute;right:78.29999999999995px;top:226.93px;font-size:10.6px;line-height:10.6px;color:#000;font-weight:normal;white-space:pre;text-align:right;-webkit-text-stroke:0.08px #000;">Gravity</div>
<div style="position:absolute;left:956px;top:222px;width:55px;height:17px;background:#fff;border-top:2px solid #7a7a72;border-left:2px solid #7a7a72;border-right:1px solid #f4f4ee;border-bottom:1px solid #f4f4ee;"></div>
<div style="position:absolute;left:959.5px;top:226.37px;font-size:10.2px;line-height:10.2px;color:#101010;font-weight:normal;white-space:pre;">0</div>
<div style="position:absolute;right:78.29999999999995px;top:252.93px;font-size:10.6px;line-height:10.6px;color:#000;font-weight:normal;white-space:pre;text-align:right;-webkit-text-stroke:0.08px #000;">Initial velocity</div>
<div style="position:absolute;left:956px;top:248px;width:55px;height:17px;background:#fff;border-top:2px solid #7a7a72;border-left:2px solid #7a7a72;border-right:1px solid #f4f4ee;border-bottom:1px solid #f4f4ee;"></div>
<div style="position:absolute;left:959.5px;top:252.37px;font-size:10.2px;line-height:10.2px;color:#101010;font-weight:normal;white-space:pre;">5</div>
<div style="position:absolute;right:78.29999999999995px;top:278.93px;font-size:10.6px;line-height:10.6px;color:#000;font-weight:normal;white-space:pre;text-align:right;-webkit-text-stroke:0.08px #000;">Terminal velocity</div>
<div style="position:absolute;left:956px;top:274px;width:55px;height:17px;background:#fff;border-top:2px solid #7a7a72;border-left:2px solid #7a7a72;border-right:1px solid #f4f4ee;border-bottom:1px solid #f4f4ee;"></div>
<div style="position:absolute;left:959.5px;top:278.37px;font-size:10.2px;line-height:10.2px;color:#101010;font-weight:normal;white-space:pre;">5</div>
<div style="position:absolute;right:78.29999999999995px;top:304.93px;font-size:10.6px;line-height:10.6px;color:#000;font-weight:normal;white-space:pre;text-align:right;-webkit-text-stroke:0.08px #000;">Drag</div>
<div style="position:absolute;left:956px;top:300px;width:55px;height:17px;background:#fff;border-top:2px solid #7a7a72;border-left:2px solid #7a7a72;border-right:1px solid #f4f4ee;border-bottom:1px solid #f4f4ee;"></div>
<div style="position:absolute;left:959.5px;top:304.37px;font-size:10.2px;line-height:10.2px;color:#101010;font-weight:normal;white-space:pre;">5</div>
<div style="position:absolute;right:78.29999999999995px;top:330.93px;font-size:10.6px;line-height:10.6px;color:#000;font-weight:normal;white-space:pre;text-align:right;-webkit-text-stroke:0.08px #000;">Life span</div>
<div style="position:absolute;left:956px;top:326px;width:55px;height:17px;background:#fff;border-top:2px solid #7a7a72;border-left:2px solid #7a7a72;border-right:1px solid #f4f4ee;border-bottom:1px solid #f4f4ee;"></div>
<div style="position:absolute;left:959.5px;top:330.37px;font-size:10.2px;line-height:10.2px;color:#101010;font-weight:normal;white-space:pre;">5</div>
<div style="position:absolute;right:78.29999999999995px;top:356.93px;font-size:10.6px;line-height:10.6px;color:#000;font-weight:normal;white-space:pre;text-align:right;-webkit-text-stroke:0.08px #000;">Splits</div>
<div style="position:absolute;left:956px;top:352px;width:55px;height:17px;background:#fff;border-top:2px solid #7a7a72;border-left:2px solid #7a7a72;border-right:1px solid #f4f4ee;border-bottom:1px solid #f4f4ee;"></div>
<div style="position:absolute;left:959.5px;top:356.37px;font-size:10.2px;line-height:10.2px;color:#101010;font-weight:normal;white-space:pre;">4</div>
<div style="position:absolute;right:78.29999999999995px;top:382.93px;font-size:10.6px;line-height:10.6px;color:#000;font-weight:normal;white-space:pre;text-align:right;-webkit-text-stroke:0.08px #000;">Split angle</div>
<div style="position:absolute;left:956px;top:378px;width:55px;height:17px;background:#fff;border-top:2px solid #7a7a72;border-left:2px solid #7a7a72;border-right:1px solid #f4f4ee;border-bottom:1px solid #f4f4ee;"></div>
<div style="position:absolute;left:959.5px;top:382.37px;font-size:10.2px;line-height:10.2px;color:#101010;font-weight:normal;white-space:pre;">33</div>
<div style="position:absolute;right:78.29999999999995px;top:408.93px;font-size:10.6px;line-height:10.6px;color:#000;font-weight:normal;white-space:pre;text-align:right;-webkit-text-stroke:0.08px #000;">Randomize values by</div>
<div style="position:absolute;left:956px;top:404px;width:55px;height:17px;background:#fff;border-top:2px solid #7a7a72;border-left:2px solid #7a7a72;border-right:1px solid #f4f4ee;border-bottom:1px solid #f4f4ee;"></div>
<div style="position:absolute;left:959.5px;top:408.37px;font-size:10.2px;line-height:10.2px;color:#101010;font-weight:normal;white-space:pre;">0</div>
<div style="position:absolute;right:78.29999999999995px;top:430.94px;font-size:10.7px;line-height:10.7px;color:#000;font-weight:normal;white-space:pre;text-align:right;-webkit-text-stroke:0.08px #000;">Use mouse velocity</div>
<div style="position:absolute;left:956px;top:428px;width:56px;height:16px;background:linear-gradient(to bottom,#9c9c9c,#c4c4c4);border-top:1px solid #7a7a7a;border-left:1px solid #8a8a8a;border-bottom:1px solid #f4f4f4;border-right:1px solid #eaeaea;"></div>
<div style="position:absolute;left:957px;top:429px;width:8px;height:14px;background:linear-gradient(to right,#ffffff,#d4d4d4);"></div>
<div style="position:absolute;right:78.29999999999995px;top:451.94px;font-size:10.7px;line-height:10.7px;color:#000;font-weight:normal;white-space:pre;text-align:right;-webkit-text-stroke:0.08px #000;">Particles follow mouse</div>
<div style="position:absolute;left:956px;top:449px;width:56px;height:16px;background:linear-gradient(to bottom,#9c9c9c,#c4c4c4);border-top:1px solid #7a7a7a;border-left:1px solid #8a8a8a;border-bottom:1px solid #f4f4f4;border-right:1px solid #eaeaea;"></div>
<div style="position:absolute;left:969px;top:450px;width:8px;height:14px;background:linear-gradient(to right,#ffffff,#d4d4d4);"></div>
<div style="position:absolute;left:886px;top:473px;width:127px;height:12px;background:linear-gradient(to right,#d8d8d8 0%,#707070 4%,#484848 12%,#a8a8a8 23%,#b0b0b8 31%,#808088 39%,#a0a0a8 47%,#404048 55%,#181820 62%,#404048 71%,#a8a8a4 77%,#a0a0a0 87%,#282828 96%,#101010 100%);"></div>
<div style="position:absolute;right:78.29999999999995px;top:492.83px;font-size:10.6px;line-height:10.6px;color:#000;font-weight:normal;white-space:pre;text-align:right;-webkit-text-stroke:0.08px #000;">Gradient index</div>
<div style="position:absolute;left:956px;top:490px;width:56px;height:16px;background:linear-gradient(to bottom,#9c9c9c,#c4c4c4);border-top:1px solid #7a7a7a;border-left:1px solid #8a8a8a;border-bottom:1px solid #f4f4f4;border-right:1px solid #eaeaea;"></div>
<div style="position:absolute;left:984px;top:491px;width:8px;height:14px;background:linear-gradient(to right,#ffffff,#d4d4d4);"></div>
<div style="position:absolute;right:102.5px;top:517.33px;font-size:10.6px;line-height:10.6px;color:#000;font-weight:normal;white-space:pre;text-align:right;-webkit-text-stroke:0.08px #000;">Style</div>
<div style="position:absolute;left:930px;top:512px;width:82px;height:19px;background:#fff;border-top:1px solid #7a7a7a;border-left:1px solid #7a7a7a;border-right:1px solid #d8d8d8;border-bottom:1px solid #d8d8d8;"></div>
<div style="position:absolute;left:935px;top:516.53px;font-size:10.6px;line-height:10.6px;color:#000;font-weight:normal;white-space:pre;-webkit-text-stroke:0.08px #000;">Brush</div>
<div style="position:absolute;left:995px;top:514px;width:16px;height:16px;background:linear-gradient(to bottom,#f4f4f4,#c8c8c8);border-left:1px solid #e0e0e0;border-right:1px solid #7a7a7a;border-bottom:1px solid #7a7a7a;"></div>
<svg style="position:absolute;left:995px;top:514px" width="16" height="16"><path d="M4 6 L11 6 L7.5 10 Z" fill="#000"/></svg>
<div style="position:absolute;right:78.29999999999995px;top:541.33px;font-size:10.6px;line-height:10.6px;color:#000;font-weight:normal;white-space:pre;text-align:right;-webkit-text-stroke:0.08px #000;">Size</div>
<div style="position:absolute;left:956px;top:537px;width:56px;height:16px;background:linear-gradient(to bottom,#9c9c9c,#c4c4c4);border-top:1px solid #7a7a7a;border-left:1px solid #8a8a8a;border-bottom:1px solid #f4f4f4;border-right:1px solid #eaeaea;"></div>
<div style="position:absolute;left:968px;top:538px;width:8px;height:14px;background:linear-gradient(to right,#ffffff,#d4d4d4);"></div>
<div style="position:absolute;right:78.29999999999995px;top:562.33px;font-size:10.6px;line-height:10.6px;color:#000;font-weight:normal;white-space:pre;text-align:right;-webkit-text-stroke:0.08px #000;">Gain</div>
<div style="position:absolute;left:956px;top:558px;width:56px;height:16px;background:linear-gradient(to bottom,#9c9c9c,#c4c4c4);border-top:1px solid #7a7a7a;border-left:1px solid #8a8a8a;border-bottom:1px solid #f4f4f4;border-right:1px solid #eaeaea;"></div>
<div style="position:absolute;left:980px;top:559px;width:8px;height:14px;background:linear-gradient(to right,#ffffff,#d4d4d4);"></div>
<div style="position:absolute;left:956px;top:582px;width:13px;height:13px;background:linear-gradient(135deg,#ecece8,#fff 60%);border-top:2px solid #7a7a72;border-left:2px solid #7a7a72;border-right:1px solid #fafaf6;border-bottom:1px solid #fafaf6;"></div>
<div style="position:absolute;left:975px;top:583.53px;font-size:10.6px;line-height:10.6px;color:#000;font-weight:normal;white-space:pre;-webkit-text-stroke:0.08px #000;">Shading</div>
<div style="position:absolute;left:956px;top:602px;width:13px;height:13px;background:linear-gradient(135deg,#ecece8,#fff 60%);border-top:2px solid #7a7a72;border-left:2px solid #7a7a72;border-right:1px solid #fafaf6;border-bottom:1px solid #fafaf6;"></div>
<div style="position:absolute;left:975px;top:603.03px;font-size:10.6px;line-height:10.6px;color:#000;font-weight:normal;white-space:pre;-webkit-text-stroke:0.08px #000;">Tinted</div>
<div style="position:absolute;left:839px;top:587px;width:23px;height:23px;background:linear-gradient(to bottom,#fbfbfb 0,#efefef 3px,#d4d4d4 100%);border:1px solid #8a8a8a;border-top-color:#fafafa;border-left-color:#f4f4f4;box-shadow:inset -1px -1px 0 #b8b8b8;"></div>
<div style="position:absolute;left:650.5px;width:400px;top:594.56px;font-size:8.2px;line-height:8.2px;color:#000;font-weight:bold;white-space:pre;text-align:center;">Fog</div>
<div style="position:absolute;left:829px;top:622px;width:193px;height:1px;background:#d0cec0;"></div>
<div style="position:absolute;left:829px;top:623px;width:193px;height:1px;background:#fafaf6;"></div>
<div style="position:absolute;left:886px;top:626px;width:45px;height:19px;background:linear-gradient(to bottom,#fbfbfb 0,#efefef 3px,#d4d4d4 100%);border:1px solid #8a8a8a;border-top-color:#fafafa;border-left-color:#f4f4f4;box-shadow:inset -1px -1px 0 #b8b8b8;"></div>
<div style="position:absolute;left:708.5px;width:400px;top:630.41px;font-size:10.5px;line-height:10.5px;color:#000;font-weight:normal;white-space:pre;text-align:center;-webkit-text-stroke:0.08px #000;">Save...</div>
<div style="position:absolute;left:936px;top:626px;width:80px;height:19px;background:linear-gradient(to bottom,#fbfbfb 0,#efefef 3px,#d4d4d4 100%);border:1px solid #8a8a8a;border-top-color:#fafafa;border-left-color:#f4f4f4;box-shadow:inset -1px -1px 0 #b8b8b8;"></div>
<div style="position:absolute;left:776.0px;width:400px;top:630.41px;font-size:10.5px;line-height:10.5px;color:#000;font-weight:normal;white-space:pre;text-align:center;-webkit-text-stroke:0.08px #000;">Settings...</div>
<div style="position:absolute;left:829px;top:647px;width:193px;height:1px;background:#6e6e6a;"></div>
<div style="position:absolute;left:829px;top:648px;width:193px;height:1px;background:#fafaf6;"></div>
<div style="position:absolute;left:829px;top:649px;width:193px;height:23px;background:#ece9d8;"></div>
<svg style="position:absolute;left:141px;top:105px" width="680" height="575" viewBox="0 0 680 575">
<defs><filter id="blur" x="-10%" y="-10%" width="120%" height="120%"><feGaussianBlur stdDeviation="4.3"/></filter></defs>
<g filter="url(#blur)"><circle cx="371" cy="293" r="20" fill="#9a92a0"/><circle cx="363" cy="309" r="16" fill="#9a92a0"/><circle cx="381" cy="285" r="16" fill="#9a92a0"/><circle cx="359" cy="290" r="14" fill="#9a92a0"/><circle cx="431.0" cy="355.0" r="12.3" fill="rgb(128,126,144)"/><circle cx="432.5" cy="356.3" r="12.3" fill="rgb(129,127,145)"/><circle cx="433.8" cy="357.5" r="12.3" fill="rgb(130,128,146)"/><circle cx="435.3" cy="358.9" r="12.3" fill="rgb(131,129,146)"/><circle cx="437.0" cy="360.4" r="12.3" fill="rgb(132,130,147)"/><circle cx="438.8" cy="361.9" r="12.3" fill="rgb(133,131,148)"/><circle cx="440.5" cy="363.5" r="12.3" fill="rgb(134,132,149)"/><circle cx="442.2" cy="364.9" r="12.3" fill="rgb(135,133,150)"/><circle cx="443.9" cy="366.3" r="12.3" fill="rgb(136,134,150)"/><circle cx="445.3" cy="367.5" r="12.3" fill="rgb(137,135,151)"/><circle cx="446.6" cy="368.5" r="12.3" fill="rgb(135,134,150)"/><circle cx="448.4" cy="369.7" r="12.3" fill="rgb(129,128,145)"/><circle cx="449.9" cy="370.7" r="12.3" fill="rgb(123,122,140)"/><circle cx="451.4" cy="371.6" r="12.3" fill="rgb(117,116,136)"/><circle cx="452.8" cy="372.4" r="12.3" fill="rgb(110,110,131)"/><circle cx="454.2" cy="373.1" r="12.3" fill="rgb(104,104,126)"/><circle cx="455.6" cy="373.8" r="12.3" fill="rgb(98,98,121)"/><circle cx="457.3" cy="374.6" r="12.3" fill="rgb(91,91,115)"/><circle cx="458.8" cy="375.3" r="12.3" fill="rgb(86,86,110)"/><circle cx="460.2" cy="375.8" r="12.3" fill="rgb(80,80,104)"/><circle cx="461.8" cy="376.3" r="12.3" fill="rgb(75,75,99)"/><circle cx="463.5" cy="376.9" r="12.3" fill="rgb(69,69,93)"/><circle cx="465.0" cy="377.3" r="12.3" fill="rgb(69,69,93)"/><circle cx="466.7" cy="377.8" r="12.3" fill="rgb(71,71,95)"/><circle cx="468.5" cy="378.2" r="12.3" fill="rgb(72,72,96)"/><circle cx="470.4" cy="378.7" r="12.3" fill="rgb(74,74,98)"/><circle cx="472.3" cy="379.2" r="12.3" fill="rgb(76,76,100)"/><circle cx="474.2" cy="379.6" r="12.3" fill="rgb(78,78,102)"/><circle cx="476.0" cy="380.0" r="12.3" fill="rgb(80,80,104)"/><circle cx="477.8" cy="380.3" r="12.3" fill="rgb(82,82,106)"/><circle cx="479.6" cy="380.6" r="12.3" fill="rgb(84,84,108)"/><circle cx="481.3" cy="380.9" r="12.3" fill="rgb(87,87,111)"/><circle cx="483.1" cy="381.2" r="12.3" fill="rgb(89,89,113)"/><circle cx="484.9" cy="381.5" r="12.3" fill="rgb(92,92,116)"/><circle cx="486.8" cy="381.8" r="12.3" fill="rgb(94,94,118)"/><circle cx="488.6" cy="382.1" r="12.3" fill="rgb(98,98,122)"/><circle cx="490.5" cy="382.6" r="12.3" fill="rgb(105,105,128)"/><circle cx="492.5" cy="383.0" r="12.3" fill="rgb(112,112,134)"/><circle cx="494.4" cy="383.5" r="12.3" fill="rgb(120,120,140)"/><circle cx="496.4" cy="384.0" r="12.3" fill="rgb(127,127,146)"/><circle cx="498.4" cy="384.4" r="12.3" fill="rgb(134,134,152)"/><circle cx="500.3" cy="384.9" r="12.3" fill="rgb(141,141,158)"/><circle cx="502.3" cy="385.3" r="12.3" fill="rgb(147,147,160)"/><circle cx="504.3" cy="385.7" r="12.3" fill="rgb(152,152,162)"/><circle cx="506.2" cy="386.1" r="12.3" fill="rgb(156,156,163)"/><circle cx="508.2" cy="386.5" r="12.3" fill="rgb(161,161,164)"/><circle cx="510.2" cy="386.8" r="12.3" fill="rgb(166,166,165)"/><circle cx="512.1" cy="387.0" r="12.3" fill="rgb(171,171,166)"/><circle cx="514.0" cy="387.0" r="12.3" fill="rgb(176,176,168)"/><circle cx="515.9" cy="386.8" r="12.3" fill="rgb(168,168,160)"/><circle cx="517.7" cy="386.5" r="12.3" fill="rgb(161,161,153)"/><circle cx="519.6" cy="386.1" r="12.3" fill="rgb(154,154,146)"/><circle cx="521.4" cy="385.6" r="12.3" fill="rgb(147,147,139)"/><circle cx="523.2" cy="385.0" r="12.3" fill="rgb(140,140,132)"/><circle cx="524.9" cy="384.4" r="12.3" fill="rgb(132,132,124)"/><circle cx="526.5" cy="383.8" r="12.3" fill="rgb(124,124,116)"/><circle cx="527.9" cy="383.2" r="12.3" fill="rgb(115,115,107)"/><circle cx="529.6" cy="382.4" r="12.3" fill="rgb(102,102,94)"/><circle cx="531.2" cy="381.5" r="12.3" fill="rgb(89,89,81)"/><circle cx="532.7" cy="380.7" r="12.3" fill="rgb(80,80,72)"/><circle cx="534.5" cy="379.8" r="12.3" fill="rgb(70,70,62)"/><circle cx="536.0" cy="379.0" r="12.3" fill="rgb(64,64,56)"/><circle cx="537.7" cy="378.2" r="12.3" fill="rgb(60,60,53)"/><circle cx="539.7" cy="377.2" r="12.3" fill="rgb(56,56,50)"/><circle cx="541.8" cy="376.3" r="12.3" fill="rgb(53,53,47)"/><circle cx="544.1" cy="375.2" r="12.3" fill="rgb(49,49,44)"/><circle cx="546.4" cy="374.1" r="12.3" fill="rgb(46,46,42)"/><circle cx="548.8" cy="373.0" r="12.3" fill="rgb(42,42,39)"/><circle cx="551.2" cy="371.8" r="12.3" fill="rgb(38,38,36)"/><circle cx="553.6" cy="370.6" r="12.3" fill="rgb(35,35,33)"/><circle cx="555.9" cy="369.3" r="12.3" fill="rgb(31,31,30)"/><circle cx="558.0" cy="368.0" r="12.3" fill="rgb(28,28,28)"/><circle cx="560.1" cy="366.7" r="12.3" fill="rgb(28,28,28)"/><circle cx="562.2" cy="365.4" r="12.3" fill="rgb(28,28,28)"/><circle cx="564.3" cy="364.1" r="12.3" fill="rgb(28,28,28)"/><circle cx="566.3" cy="362.8" r="12.3" fill="rgb(28,28,28)"/><circle cx="568.4" cy="361.4" r="12.3" fill="rgb(28,28,28)"/><circle cx="570.3" cy="359.9" r="12.3" fill="rgb(28,28,28)"/><circle cx="572.2" cy="358.4" r="12.3" fill="rgb(28,28,28)"/><circle cx="574.0" cy="356.7" r="12.3" fill="rgb(28,28,28)"/><circle cx="575.6" cy="354.9" r="12.3" fill="rgb(28,28,28)"/><circle cx="577.0" cy="353.0" r="12.3" fill="rgb(28,28,28)"/><circle cx="578.3" cy="350.8" r="12.3" fill="rgb(28,28,28)"/><circle cx="579.4" cy="348.2" r="12.3" fill="rgb(28,28,28)"/><circle cx="580.5" cy="345.4" r="12.3" fill="rgb(28,28,28)"/><circle cx="580.9" cy="344.0" r="12.3" fill="rgb(28,28,28)"/><circle cx="581.4" cy="342.5" r="12.3" fill="rgb(28,28,28)"/><circle cx="581.8" cy="341.0" r="12.3" fill="rgb(28,28,28)"/><circle cx="582.2" cy="339.6" r="12.3" fill="rgb(29,29,29)"/><circle cx="582.6" cy="338.1" r="12.3" fill="rgb(29,29,29)"/><circle cx="583.2" cy="335.3" r="12.3" fill="rgb(29,29,29)"/><circle cx="583.8" cy="332.7" r="12.3" fill="rgb(29,29,29)"/><circle cx="584.3" cy="330.5" r="12.3" fill="rgb(29,29,29)"/><circle cx="584.8" cy="328.7" r="12.3" fill="rgb(29,29,29)"/><circle cx="585.0" cy="328.0" r="12.3" fill="rgb(30,30,30)"/><circle cx="371.0" cy="287.0" r="12.3" fill="rgb(156,148,162)"/><circle cx="369.4" cy="286.8" r="12.3" fill="rgb(157,149,163)"/><circle cx="367.5" cy="286.5" r="12.3" fill="rgb(158,151,164)"/><circle cx="365.1" cy="286.2" r="12.3" fill="rgb(159,152,166)"/><circle cx="362.5" cy="285.9" r="12.3" fill="rgb(160,154,167)"/><circle cx="359.7" cy="285.5" r="12.3" fill="rgb(162,156,169)"/><circle cx="358.2" cy="285.3" r="12.3" fill="rgb(162,156,169)"/><circle cx="356.7" cy="285.1" r="12.3" fill="rgb(163,157,170)"/><circle cx="355.1" cy="284.9" r="12.3" fill="rgb(163,158,171)"/><circle cx="353.5" cy="284.8" r="12.3" fill="rgb(164,159,171)"/><circle cx="351.9" cy="284.6" r="12.3" fill="rgb(165,160,172)"/><circle cx="350.3" cy="284.5" r="12.3" fill="rgb(165,160,173)"/><circle cx="348.7" cy="284.3" r="12.3" fill="rgb(166,161,173)"/><circle cx="347.1" cy="284.2" r="12.3" fill="rgb(166,162,174)"/><circle cx="345.6" cy="284.1" r="12.3" fill="rgb(167,163,175)"/><circle cx="344.0" cy="284.0" r="12.3" fill="rgb(168,164,176)"/><circle cx="342.4" cy="283.9" r="12.3" fill="rgb(167,163,175)"/><circle cx="340.8" cy="283.9" r="12.3" fill="rgb(166,162,174)"/><circle cx="339.1" cy="283.8" r="12.3" fill="rgb(165,162,174)"/><circle cx="337.4" cy="283.8" r="12.3" fill="rgb(164,161,173)"/><circle cx="335.6" cy="283.8" r="12.3" fill="rgb(164,161,173)"/><circle cx="333.8" cy="283.8" r="12.3" fill="rgb(163,160,172)"/><circle cx="331.9" cy="283.8" r="12.3" fill="rgb(162,159,171)"/><circle cx="330.1" cy="283.8" r="12.3" fill="rgb(161,159,171)"/><circle cx="328.2" cy="283.8" r="12.3" fill="rgb(160,158,170)"/><circle cx="326.4" cy="283.8" r="12.3" fill="rgb(160,158,170)"/><circle cx="324.5" cy="283.8" r="12.3" fill="rgb(159,157,169)"/><circle cx="322.7" cy="283.9" r="12.3" fill="rgb(158,156,168)"/><circle cx="320.8" cy="283.9" r="12.3" fill="rgb(157,156,168)"/><circle cx="319.0" cy="283.9" r="12.3" fill="rgb(156,155,167)"/><circle cx="317.2" cy="283.9" r="12.3" fill="rgb(156,155,167)"/><circle cx="315.5" cy="284.0" r="12.3" fill="rgb(155,154,166)"/><circle cx="313.8" cy="284.0" r="12.3" fill="rgb(154,153,165)"/><circle cx="312.1" cy="284.0" r="12.3" fill="rgb(153,153,165)"/><circle cx="310.5" cy="284.0" r="12.3" fill="rgb(152,152,164)"/><circle cx="309.0" cy="284.0" r="12.3" fill="rgb(152,152,164)"/><circle cx="306.0" cy="284.0" r="12.3" fill="rgb(150,150,163)"/><circle cx="303.2" cy="284.0" r="12.3" fill="rgb(149,149,162)"/><circle cx="300.4" cy="284.0" r="12.3" fill="rgb(148,148,161)"/><circle cx="297.7" cy="284.0" r="12.3" fill="rgb(147,147,160)"/><circle cx="295.1" cy="284.0" r="12.3" fill="rgb(146,146,160)"/><circle cx="292.7" cy="284.0" r="12.3" fill="rgb(144,144,159)"/><circle cx="290.3" cy="284.0" r="12.3" fill="rgb(143,143,158)"/><circle cx="288.1" cy="284.0" r="12.3" fill="rgb(142,142,157)"/><circle cx="286.0" cy="284.0" r="12.3" fill="rgb(141,141,156)"/><circle cx="284.0" cy="284.0" r="12.3" fill="rgb(140,140,156)"/><circle cx="282.2" cy="284.0" r="12.3" fill="rgb(134,134,150)"/><circle cx="280.6" cy="284.0" r="12.3" fill="rgb(128,128,145)"/><circle cx="278.4" cy="284.0" r="12.3" fill="rgb(119,119,137)"/><circle cx="276.6" cy="284.0" r="12.3" fill="rgb(110,110,130)"/><circle cx="274.9" cy="284.0" r="12.3" fill="rgb(101,101,122)"/><circle cx="273.2" cy="284.0" r="12.3" fill="rgb(92,92,114)"/><circle cx="271.6" cy="284.0" r="12.3" fill="rgb(83,83,106)"/><circle cx="269.9" cy="284.0" r="12.3" fill="rgb(78,78,101)"/><circle cx="268.3" cy="284.0" r="12.3" fill="rgb(75,75,98)"/><circle cx="266.8" cy="284.0" r="12.3" fill="rgb(72,72,95)"/><circle cx="264.9" cy="284.1" r="12.3" fill="rgb(68,68,90)"/><circle cx="263.0" cy="284.2" r="12.3" fill="rgb(64,64,86)"/><circle cx="261.0" cy="284.5" r="12.3" fill="rgb(60,60,82)"/><circle cx="259.5" cy="284.8" r="12.3" fill="rgb(61,61,82)"/><circle cx="258.0" cy="285.3" r="12.3" fill="rgb(62,62,82)"/><circle cx="256.4" cy="285.7" r="12.3" fill="rgb(63,63,82)"/><circle cx="254.9" cy="286.3" r="12.3" fill="rgb(64,64,83)"/><circle cx="253.4" cy="286.9" r="12.3" fill="rgb(66,66,83)"/><circle cx="252.0" cy="287.5" r="12.3" fill="rgb(67,67,83)"/><circle cx="250.5" cy="288.2" r="12.3" fill="rgb(69,69,85)"/><circle cx="249.2" cy="289.0" r="12.3" fill="rgb(73,73,88)"/><circle cx="247.9" cy="289.8" r="12.3" fill="rgb(77,77,91)"/><circle cx="246.7" cy="290.7" r="12.3" fill="rgb(82,82,94)"/><circle cx="245.4" cy="291.7" r="12.3" fill="rgb(86,86,97)"/><circle cx="244.0" cy="292.6" r="12.3" fill="rgb(90,90,100)"/><circle cx="242.5" cy="293.7" r="12.3" fill="rgb(94,94,103)"/><circle cx="240.8" cy="294.7" r="12.3" fill="rgb(101,101,108)"/><circle cx="238.9" cy="295.9" r="12.3" fill="rgb(110,110,115)"/><circle cx="237.5" cy="296.7" r="12.3" fill="rgb(116,116,119)"/><circle cx="236.1" cy="297.5" r="12.3" fill="rgb(122,122,123)"/><circle cx="234.7" cy="298.3" r="12.3" fill="rgb(127,127,128)"/><circle cx="233.3" cy="299.1" r="12.3" fill="rgb(133,133,132)"/><circle cx="232.0" cy="300.0" r="12.3" fill="rgb(139,139,137)"/><circle cx="230.7" cy="300.8" r="12.3" fill="rgb(145,145,141)"/><circle cx="229.0" cy="302.0" r="12.3" fill="rgb(154,154,148)"/><circle cx="227.5" cy="303.2" r="12.3" fill="rgb(154,154,148)"/><circle cx="226.2" cy="304.3" r="12.3" fill="rgb(155,155,149)"/><circle cx="225.0" cy="305.4" r="12.3" fill="rgb(156,156,149)"/><circle cx="223.9" cy="306.6" r="12.3" fill="rgb(157,157,150)"/><circle cx="222.8" cy="307.8" r="12.3" fill="rgb(158,158,151)"/><circle cx="221.7" cy="309.1" r="12.3" fill="rgb(159,159,151)"/><circle cx="220.6" cy="310.5" r="12.3" fill="rgb(156,156,149)"/><circle cx="219.5" cy="312.0" r="12.3" fill="rgb(147,147,140)"/><circle cx="218.4" cy="313.6" r="12.3" fill="rgb(137,137,132)"/><circle cx="217.3" cy="315.3" r="12.3" fill="rgb(128,128,124)"/><circle cx="216.3" cy="317.0" r="12.3" fill="rgb(118,118,115)"/><circle cx="215.3" cy="318.8" r="12.3" fill="rgb(108,108,107)"/><circle cx="214.3" cy="320.4" r="12.3" fill="rgb(99,99,98)"/><circle cx="213.4" cy="322.1" r="12.3" fill="rgb(91,91,91)"/><circle cx="212.6" cy="323.5" r="12.3" fill="rgb(84,84,84)"/><circle cx="211.8" cy="324.9" r="12.3" fill="rgb(76,76,76)"/><circle cx="211.0" cy="326.4" r="12.3" fill="rgb(69,69,69)"/><circle cx="210.3" cy="328.0" r="12.3" fill="rgb(62,62,62)"/><circle cx="209.6" cy="329.8" r="12.3" fill="rgb(55,55,55)"/><circle cx="209.0" cy="332.0" r="12.3" fill="rgb(48,48,48)"/><circle cx="208.6" cy="333.7" r="12.3" fill="rgb(46,46,46)"/><circle cx="208.2" cy="335.6" r="12.3" fill="rgb(44,44,44)"/><circle cx="207.8" cy="337.6" r="12.3" fill="rgb(42,42,42)"/><circle cx="207.4" cy="339.8" r="12.3" fill="rgb(40,40,40)"/><circle cx="207.0" cy="342.0" r="12.3" fill="rgb(38,38,38)"/><circle cx="206.7" cy="344.3" r="12.3" fill="rgb(36,36,36)"/><circle cx="206.4" cy="346.5" r="12.3" fill="rgb(34,34,34)"/><circle cx="206.2" cy="348.8" r="12.3" fill="rgb(32,32,32)"/><circle cx="206.0" cy="350.9" r="12.3" fill="rgb(30,30,30)"/><circle cx="206.0" cy="353.0" r="12.3" fill="rgb(28,28,28)"/><circle cx="206.0" cy="355.0" r="12.3" fill="rgb(28,28,28)"/><circle cx="206.1" cy="357.0" r="12.3" fill="rgb(28,28,28)"/><circle cx="206.3" cy="359.0" r="12.3" fill="rgb(28,28,28)"/><circle cx="206.5" cy="361.0" r="12.3" fill="rgb(28,28,28)"/><circle cx="206.8" cy="363.0" r="12.3" fill="rgb(28,28,28)"/><circle cx="207.1" cy="364.9" r="12.3" fill="rgb(28,28,28)"/><circle cx="207.5" cy="366.8" r="12.3" fill="rgb(28,28,28)"/><circle cx="207.9" cy="368.6" r="12.3" fill="rgb(28,28,28)"/><circle cx="208.4" cy="370.4" r="12.3" fill="rgb(28,28,28)"/><circle cx="209.0" cy="372.0" r="12.3" fill="rgb(28,28,28)"/><circle cx="209.7" cy="373.6" r="12.3" fill="rgb(28,28,28)"/><circle cx="210.6" cy="375.2" r="12.3" fill="rgb(28,28,28)"/><circle cx="211.5" cy="376.8" r="12.3" fill="rgb(28,28,28)"/><circle cx="212.6" cy="378.3" r="12.3" fill="rgb(28,28,28)"/><circle cx="213.7" cy="379.7" r="12.3" fill="rgb(29,29,29)"/><circle cx="214.8" cy="381.0" r="12.3" fill="rgb(29,29,29)"/><circle cx="215.8" cy="382.2" r="12.3" fill="rgb(29,29,29)"/><circle cx="217.1" cy="383.8" r="12.3" fill="rgb(29,29,29)"/><circle cx="218.0" cy="385.0" r="12.3" fill="rgb(30,30,30)"/><circle cx="218.0" cy="385.0" r="12.3" fill="rgb(30,30,30)"/><circle cx="371.0" cy="287.0" r="12.3" fill="rgb(154,146,160)"/><circle cx="372.2" cy="286.1" r="12.3" fill="rgb(153,145,160)"/><circle cx="373.9" cy="285.0" r="12.3" fill="rgb(153,145,160)"/><circle cx="375.9" cy="283.6" r="12.3" fill="rgb(152,145,160)"/><circle cx="378.1" cy="282.1" r="12.3" fill="rgb(152,145,160)"/><circle cx="380.4" cy="280.5" r="12.3" fill="rgb(152,145,161)"/><circle cx="382.8" cy="278.8" r="12.3" fill="rgb(151,144,161)"/><circle cx="385.2" cy="277.2" r="12.3" fill="rgb(151,144,161)"/><circle cx="387.4" cy="275.6" r="12.3" fill="rgb(150,144,161)"/><circle cx="389.4" cy="274.2" r="12.3" fill="rgb(150,144,161)"/><circle cx="391.0" cy="273.0" r="12.3" fill="rgb(150,144,162)"/><circle cx="392.4" cy="271.9" r="12.3" fill="rgb(145,140,158)"/><circle cx="393.5" cy="271.0" r="12.3" fill="rgb(141,136,155)"/><circle cx="395.0" cy="269.7" r="12.3" fill="rgb(134,130,150)"/><circle cx="396.3" cy="268.5" r="12.3" fill="rgb(128,124,145)"/><circle cx="397.4" cy="267.4" r="12.3" fill="rgb(121,118,139)"/><circle cx="398.9" cy="266.0" r="12.3" fill="rgb(112,110,133)"/><circle cx="400.0" cy="265.0" r="12.3" fill="rgb(106,104,128)"/><circle cx="401.2" cy="264.0" r="12.3" fill="rgb(99,98,122)"/><circle cx="402.7" cy="262.8" r="12.3" fill="rgb(91,90,114)"/><circle cx="404.2" cy="261.7" r="12.3" fill="rgb(82,82,106)"/><circle cx="405.5" cy="260.6" r="12.3" fill="rgb(74,74,98)"/><circle cx="406.7" cy="259.3" r="12.3" fill="rgb(66,66,90)"/><circle cx="407.8" cy="257.9" r="12.3" fill="rgb(71,71,94)"/><circle cx="408.7" cy="256.4" r="12.3" fill="rgb(80,80,102)"/><circle cx="409.6" cy="254.8" r="12.3" fill="rgb(90,90,110)"/><circle cx="410.3" cy="253.1" r="12.3" fill="rgb(100,100,118)"/><circle cx="410.9" cy="251.4" r="12.3" fill="rgb(109,109,126)"/><circle cx="411.3" cy="249.7" r="12.3" fill="rgb(119,119,132)"/><circle cx="411.6" cy="248.0" r="12.3" fill="rgb(128,128,139)"/><circle cx="411.8" cy="246.2" r="12.3" fill="rgb(138,138,145)"/><circle cx="411.9" cy="244.4" r="12.3" fill="rgb(148,148,152)"/><circle cx="412.0" cy="242.5" r="12.3" fill="rgb(157,157,158)"/><circle cx="412.1" cy="241.0" r="12.3" fill="rgb(152,152,151)"/><circle cx="412.3" cy="239.4" r="12.3" fill="rgb(140,140,138)"/><circle cx="412.5" cy="237.8" r="12.3" fill="rgb(128,128,124)"/><circle cx="412.7" cy="236.1" r="12.3" fill="rgb(116,116,111)"/><circle cx="412.7" cy="234.4" r="12.3" fill="rgb(104,104,98)"/><circle cx="412.5" cy="232.7" r="12.3" fill="rgb(92,92,85)"/><circle cx="412.0" cy="231.0" r="12.3" fill="rgb(80,80,72)"/><circle cx="411.1" cy="229.2" r="12.3" fill="rgb(72,72,65)"/><circle cx="409.9" cy="227.3" r="12.3" fill="rgb(64,64,58)"/><circle cx="409.0" cy="225.9" r="12.3" fill="rgb(59,59,54)"/><circle cx="408.0" cy="224.6" r="12.3" fill="rgb(54,54,50)"/><circle cx="407.0" cy="223.3" r="12.3" fill="rgb(48,48,45)"/><circle cx="405.9" cy="222.1" r="12.3" fill="rgb(43,43,41)"/><circle cx="404.9" cy="221.0" r="12.3" fill="rgb(38,38,36)"/><circle cx="403.4" cy="219.4" r="12.3" fill="rgb(30,30,30)"/><circle cx="402.1" cy="218.2" r="12.3" fill="rgb(28,28,28)"/><circle cx="400.7" cy="217.1" r="12.3" fill="rgb(28,28,28)"/><circle cx="399.3" cy="216.3" r="12.3" fill="rgb(28,28,28)"/><circle cx="398.0" cy="215.5" r="12.3" fill="rgb(29,29,29)"/><circle cx="396.4" cy="214.7" r="12.3" fill="rgb(29,29,29)"/><circle cx="395.0" cy="214.0" r="12.3" fill="rgb(30,30,30)"/><circle cx="395.0" cy="214.0" r="12.3" fill="rgb(30,30,30)"/><circle cx="367.0" cy="295.0" r="12.3" fill="rgb(156,148,162)"/><circle cx="366.9" cy="297.4" r="12.3" fill="rgb(156,149,163)"/><circle cx="366.8" cy="298.9" r="12.3" fill="rgb(156,149,163)"/><circle cx="366.7" cy="300.6" r="12.3" fill="rgb(156,150,164)"/><circle cx="366.6" cy="302.4" r="12.3" fill="rgb(157,151,164)"/><circle cx="366.5" cy="304.4" r="12.3" fill="rgb(157,151,165)"/><circle cx="366.4" cy="306.4" r="12.3" fill="rgb(157,152,165)"/><circle cx="366.3" cy="308.6" r="12.3" fill="rgb(157,152,166)"/><circle cx="366.2" cy="310.8" r="12.3" fill="rgb(157,153,166)"/><circle cx="366.1" cy="313.1" r="12.3" fill="rgb(158,154,167)"/><circle cx="365.9" cy="315.5" r="12.3" fill="rgb(158,154,167)"/><circle cx="365.8" cy="317.8" r="12.3" fill="rgb(158,155,168)"/><circle cx="365.7" cy="320.1" r="12.3" fill="rgb(158,155,168)"/><circle cx="365.6" cy="322.5" r="12.3" fill="rgb(158,156,169)"/><circle cx="365.5" cy="324.8" r="12.3" fill="rgb(159,157,169)"/><circle cx="365.4" cy="327.0" r="12.3" fill="rgb(159,157,170)"/><circle cx="365.3" cy="329.2" r="12.3" fill="rgb(159,158,170)"/><circle cx="365.2" cy="331.2" r="12.3" fill="rgb(159,158,171)"/><circle cx="365.1" cy="333.2" r="12.3" fill="rgb(159,159,171)"/><circle cx="365.0" cy="335.0" r="12.3" fill="rgb(160,160,172)"/><circle cx="364.9" cy="336.7" r="12.3" fill="rgb(159,159,172)"/><circle cx="364.9" cy="338.5" r="12.3" fill="rgb(159,159,172)"/><circle cx="364.8" cy="340.2" r="12.3" fill="rgb(159,159,172)"/><circle cx="364.7" cy="341.9" r="12.3" fill="rgb(159,159,172)"/><circle cx="364.7" cy="343.6" r="12.3" fill="rgb(159,159,172)"/><circle cx="364.6" cy="345.2" r="12.3" fill="rgb(158,158,172)"/><circle cx="364.5" cy="346.8" r="12.3" fill="rgb(158,158,172)"/><circle cx="364.5" cy="348.4" r="12.3" fill="rgb(158,158,172)"/><circle cx="364.4" cy="350.0" r="12.3" fill="rgb(158,158,172)"/><circle cx="364.4" cy="351.6" r="12.3" fill="rgb(158,158,172)"/><circle cx="364.3" cy="353.1" r="12.3" fill="rgb(157,157,172)"/><circle cx="364.2" cy="356.0" r="12.3" fill="rgb(157,157,172)"/><circle cx="364.2" cy="358.8" r="12.3" fill="rgb(157,157,172)"/><circle cx="364.1" cy="361.4" r="12.3" fill="rgb(156,156,172)"/><circle cx="364.0" cy="363.9" r="12.3" fill="rgb(156,156,172)"/><circle cx="364.0" cy="366.1" r="12.3" fill="rgb(155,155,171)"/><circle cx="363.9" cy="368.1" r="12.3" fill="rgb(153,153,169)"/><circle cx="363.9" cy="369.8" r="12.3" fill="rgb(151,151,168)"/><circle cx="363.8" cy="371.4" r="12.3" fill="rgb(149,149,166)"/><circle cx="363.8" cy="373.4" r="12.3" fill="rgb(147,147,164)"/><circle cx="363.8" cy="375.3" r="12.3" fill="rgb(144,144,161)"/><circle cx="363.9" cy="377.2" r="12.3" fill="rgb(141,141,159)"/><circle cx="364.0" cy="379.3" r="12.3" fill="rgb(138,138,156)"/><circle cx="364.1" cy="381.5" r="12.3" fill="rgb(130,130,148)"/><circle cx="364.2" cy="383.1" r="12.3" fill="rgb(122,122,141)"/><circle cx="364.4" cy="384.7" r="12.3" fill="rgb(114,114,133)"/><circle cx="364.6" cy="386.2" r="12.3" fill="rgb(106,106,126)"/><circle cx="364.8" cy="387.8" r="12.3" fill="rgb(99,99,119)"/><circle cx="365.0" cy="389.4" r="12.3" fill="rgb(91,91,111)"/><circle cx="365.2" cy="390.9" r="12.3" fill="rgb(83,83,104)"/><circle cx="365.6" cy="393.0" r="12.3" fill="rgb(71,71,93)"/><circle cx="366.0" cy="395.0" r="12.3" fill="rgb(60,60,82)"/><circle cx="366.5" cy="396.8" r="12.3" fill="rgb(63,63,84)"/><circle cx="367.0" cy="398.4" r="12.3" fill="rgb(66,66,86)"/><circle cx="367.5" cy="399.9" r="12.3" fill="rgb(69,69,88)"/><circle cx="368.1" cy="401.3" r="12.3" fill="rgb(72,72,90)"/><circle cx="368.7" cy="402.7" r="12.3" fill="rgb(75,75,92)"/><circle cx="369.5" cy="404.1" r="12.3" fill="rgb(78,78,94)"/><circle cx="370.3" cy="405.5" r="12.3" fill="rgb(82,82,98)"/><circle cx="371.2" cy="406.7" r="12.3" fill="rgb(89,89,104)"/><circle cx="372.1" cy="407.9" r="12.3" fill="rgb(96,96,110)"/><circle cx="373.1" cy="409.1" r="12.3" fill="rgb(104,104,116)"/><circle cx="374.2" cy="410.3" r="12.3" fill="rgb(111,111,122)"/><circle cx="375.4" cy="411.7" r="12.3" fill="rgb(118,118,128)"/><circle cx="376.6" cy="413.4" r="12.3" fill="rgb(125,125,134)"/><circle cx="377.4" cy="414.7" r="12.3" fill="rgb(129,129,137)"/><circle cx="378.3" cy="416.2" r="12.3" fill="rgb(133,133,139)"/><circle cx="379.2" cy="417.9" r="12.3" fill="rgb(137,137,141)"/><circle cx="380.2" cy="419.6" r="12.3" fill="rgb(140,140,143)"/><circle cx="381.1" cy="421.5" r="12.3" fill="rgb(144,144,145)"/><circle cx="382.1" cy="423.4" r="12.3" fill="rgb(147,147,147)"/><circle cx="383.2" cy="425.2" r="12.3" fill="rgb(151,151,149)"/><circle cx="384.2" cy="427.1" r="12.3" fill="rgb(155,155,151)"/><circle cx="385.3" cy="428.8" r="12.3" fill="rgb(158,158,153)"/><circle cx="386.4" cy="430.3" r="12.3" fill="rgb(162,162,155)"/><circle cx="387.6" cy="431.7" r="12.3" fill="rgb(159,159,151)"/><circle cx="388.8" cy="432.9" r="12.3" fill="rgb(149,149,142)"/><circle cx="390.0" cy="434.1" r="12.3" fill="rgb(139,139,133)"/><circle cx="391.2" cy="435.2" r="12.3" fill="rgb(129,129,123)"/><circle cx="392.5" cy="436.2" r="12.3" fill="rgb(119,119,114)"/><circle cx="393.8" cy="437.2" r="12.3" fill="rgb(109,109,105)"/><circle cx="395.1" cy="438.1" r="12.3" fill="rgb(99,99,96)"/><circle cx="396.5" cy="438.9" r="12.3" fill="rgb(89,89,87)"/><circle cx="397.9" cy="439.8" r="12.3" fill="rgb(79,79,77)"/><circle cx="399.3" cy="440.6" r="12.3" fill="rgb(69,69,68)"/><circle cx="400.7" cy="441.4" r="12.3" fill="rgb(62,62,62)"/><circle cx="402.2" cy="442.2" r="12.3" fill="rgb(58,58,58)"/><circle cx="403.7" cy="443.0" r="12.3" fill="rgb(55,55,55)"/><circle cx="405.2" cy="443.7" r="12.3" fill="rgb(51,51,51)"/><circle cx="406.7" cy="444.4" r="12.3" fill="rgb(47,47,47)"/><circle cx="408.3" cy="445.1" r="12.3" fill="rgb(44,44,44)"/><circle cx="409.9" cy="445.7" r="12.3" fill="rgb(40,40,40)"/><circle cx="411.6" cy="446.2" r="12.3" fill="rgb(37,37,37)"/><circle cx="413.3" cy="446.6" r="12.3" fill="rgb(33,33,33)"/><circle cx="415.1" cy="446.9" r="12.3" fill="rgb(29,29,29)"/><circle cx="416.9" cy="447.1" r="12.3" fill="rgb(28,28,28)"/><circle cx="418.8" cy="447.2" r="12.3" fill="rgb(28,28,28)"/><circle cx="420.8" cy="447.2" r="12.3" fill="rgb(28,28,28)"/><circle cx="422.8" cy="447.1" r="12.3" fill="rgb(28,28,28)"/><circle cx="424.9" cy="447.0" r="12.3" fill="rgb(28,28,28)"/><circle cx="427.0" cy="446.8" r="12.3" fill="rgb(28,28,28)"/><circle cx="429.2" cy="446.5" r="12.3" fill="rgb(28,28,28)"/><circle cx="431.4" cy="446.1" r="12.3" fill="rgb(28,28,28)"/><circle cx="433.6" cy="445.7" r="12.3" fill="rgb(28,28,28)"/><circle cx="435.9" cy="445.2" r="12.3" fill="rgb(28,28,28)"/><circle cx="438.2" cy="444.7" r="12.3" fill="rgb(28,28,28)"/><circle cx="440.8" cy="444.0" r="12.3" fill="rgb(28,28,28)"/><circle cx="443.6" cy="443.2" r="12.3" fill="rgb(28,28,28)"/><circle cx="445.0" cy="442.8" r="12.3" fill="rgb(28,28,28)"/><circle cx="446.4" cy="442.3" r="12.3" fill="rgb(28,28,28)"/><circle cx="447.9" cy="441.8" r="12.3" fill="rgb(28,28,28)"/><circle cx="449.4" cy="441.4" r="12.3" fill="rgb(28,28,28)"/><circle cx="450.8" cy="440.9" r="12.3" fill="rgb(29,29,29)"/><circle cx="453.6" cy="439.9" r="12.3" fill="rgb(29,29,29)"/><circle cx="456.2" cy="439.0" r="12.3" fill="rgb(29,29,29)"/><circle cx="458.5" cy="438.2" r="12.3" fill="rgb(29,29,29)"/><circle cx="460.5" cy="437.5" r="12.3" fill="rgb(29,29,29)"/><circle cx="462.0" cy="437.0" r="12.3" fill="rgb(30,30,30)"/><circle cx="462.0" cy="437.0" r="12.3" fill="rgb(30,30,30)"/><circle cx="374.0" cy="297.0" r="12.3" fill="rgb(156,148,162)"/><circle cx="375.4" cy="298.2" r="12.3" fill="rgb(154,146,160)"/><circle cx="377.3" cy="299.9" r="12.3" fill="rgb(152,145,159)"/><circle cx="379.6" cy="301.8" r="12.3" fill="rgb(150,143,158)"/><circle cx="380.9" cy="302.9" r="12.3" fill="rgb(149,143,157)"/><circle cx="382.2" cy="304.0" r="12.3" fill="rgb(148,142,157)"/><circle cx="383.5" cy="305.1" r="12.3" fill="rgb(147,141,156)"/><circle cx="384.9" cy="306.3" r="12.3" fill="rgb(147,141,156)"/><circle cx="386.3" cy="307.5" r="12.3" fill="rgb(146,140,155)"/><circle cx="387.6" cy="308.7" r="12.3" fill="rgb(145,139,154)"/><circle cx="389.0" cy="309.9" r="12.3" fill="rgb(144,138,154)"/><circle cx="390.3" cy="311.0" r="12.3" fill="rgb(143,138,153)"/><circle cx="391.6" cy="312.2" r="12.3" fill="rgb(142,137,153)"/><circle cx="392.9" cy="313.3" r="12.3" fill="rgb(141,136,152)"/><circle cx="394.0" cy="314.3" r="12.3" fill="rgb(140,136,151)"/><circle cx="396.1" cy="316.2" r="12.3" fill="rgb(138,134,150)"/><circle cx="397.8" cy="317.8" r="12.3" fill="rgb(135,131,148)"/><circle cx="399.2" cy="319.1" r="12.3" fill="rgb(130,127,144)"/><circle cx="400.4" cy="320.4" r="12.3" fill="rgb(126,123,140)"/><circle cx="401.5" cy="321.6" r="12.3" fill="rgb(121,118,136)"/><circle cx="402.9" cy="323.1" r="12.3" fill="rgb(114,112,131)"/><circle cx="404.1" cy="324.6" r="12.3" fill="rgb(106,105,125)"/><circle cx="405.3" cy="326.0" r="12.3" fill="rgb(99,98,119)"/><circle cx="406.5" cy="327.5" r="12.3" fill="rgb(92,92,113)"/><circle cx="407.9" cy="329.1" r="12.3" fill="rgb(87,87,109)"/><circle cx="409.3" cy="330.7" r="12.3" fill="rgb(83,83,106)"/><circle cx="410.6" cy="332.3" r="12.3" fill="rgb(79,79,102)"/><circle cx="411.9" cy="333.8" r="12.3" fill="rgb(75,75,98)"/><circle cx="413.3" cy="335.3" r="12.3" fill="rgb(71,71,95)"/><circle cx="414.6" cy="336.7" r="12.3" fill="rgb(67,67,91)"/><circle cx="416.0" cy="338.0" r="12.3" fill="rgb(64,64,88)"/><circle cx="417.4" cy="339.1" r="12.3" fill="rgb(68,68,90)"/><circle cx="418.9" cy="340.1" r="12.3" fill="rgb(73,73,92)"/><circle cx="420.4" cy="341.0" r="12.3" fill="rgb(78,78,95)"/><circle cx="421.9" cy="341.9" r="12.3" fill="rgb(83,83,97)"/><circle cx="423.4" cy="342.7" r="12.3" fill="rgb(88,88,100)"/><circle cx="425.0" cy="343.5" r="12.3" fill="rgb(92,92,102)"/><circle cx="426.5" cy="344.3" r="12.3" fill="rgb(98,98,105)"/><circle cx="428.0" cy="345.3" r="12.3" fill="rgb(104,104,108)"/><circle cx="429.4" cy="346.3" r="12.3" fill="rgb(110,110,112)"/><circle cx="430.8" cy="347.3" r="12.3" fill="rgb(117,117,116)"/><circle cx="432.4" cy="348.2" r="12.3" fill="rgb(123,123,119)"/><circle cx="434.1" cy="348.8" r="12.3" fill="rgb(129,129,123)"/><circle cx="436.2" cy="349.0" r="12.3" fill="rgb(135,135,126)"/><circle cx="437.8" cy="348.9" r="12.3" fill="rgb(133,133,124)"/><circle cx="439.7" cy="348.7" r="12.3" fill="rgb(124,124,116)"/><circle cx="441.7" cy="348.3" r="12.3" fill="rgb(115,115,108)"/><circle cx="443.8" cy="347.7" r="12.3" fill="rgb(106,106,100)"/><circle cx="446.0" cy="347.1" r="12.3" fill="rgb(97,97,92)"/><circle cx="448.3" cy="346.3" r="12.3" fill="rgb(88,88,84)"/><circle cx="450.6" cy="345.4" r="12.3" fill="rgb(79,79,76)"/><circle cx="452.9" cy="344.5" r="12.3" fill="rgb(70,70,68)"/><circle cx="455.0" cy="343.5" r="12.3" fill="rgb(61,61,60)"/><circle cx="457.1" cy="342.5" r="12.3" fill="rgb(52,52,52)"/><circle cx="458.9" cy="341.4" r="12.3" fill="rgb(47,47,47)"/><circle cx="460.8" cy="340.1" r="12.3" fill="rgb(45,45,45)"/><circle cx="462.7" cy="338.7" r="12.3" fill="rgb(43,43,43)"/><circle cx="464.6" cy="337.1" r="12.3" fill="rgb(41,41,41)"/><circle cx="466.4" cy="335.4" r="12.3" fill="rgb(39,39,39)"/><circle cx="468.2" cy="333.7" r="12.3" fill="rgb(37,37,37)"/><circle cx="469.8" cy="332.1" r="12.3" fill="rgb(35,35,35)"/><circle cx="471.2" cy="330.7" r="12.3" fill="rgb(33,33,33)"/><circle cx="472.5" cy="329.4" r="12.3" fill="rgb(31,31,31)"/><circle cx="474.0" cy="328.0" r="12.3" fill="rgb(28,28,28)"/><circle cx="474.0" cy="328.0" r="12.3" fill="rgb(28,28,28)"/></g>
<path d="M369.5,359.5 H387 M378.5,350.5 V368" stroke="#1a1a1a" stroke-width="1"/>
</svg>
<div style="position:absolute;left:0px;top:765px;width:826px;height:1px;background:#80868c;"></div>
<div style="position:absolute;left:829px;top:764px;width:193px;height:2px;background:#e4e4e0;"></div>
<div style="position:absolute;left:1021px;top:74px;width:1px;height:692px;background:#d8d8d4;"></div>
<div style="position:absolute;left:0px;top:766px;width:1024px;height:2px;background:#f8f8f8;"></div>
</body></html>
